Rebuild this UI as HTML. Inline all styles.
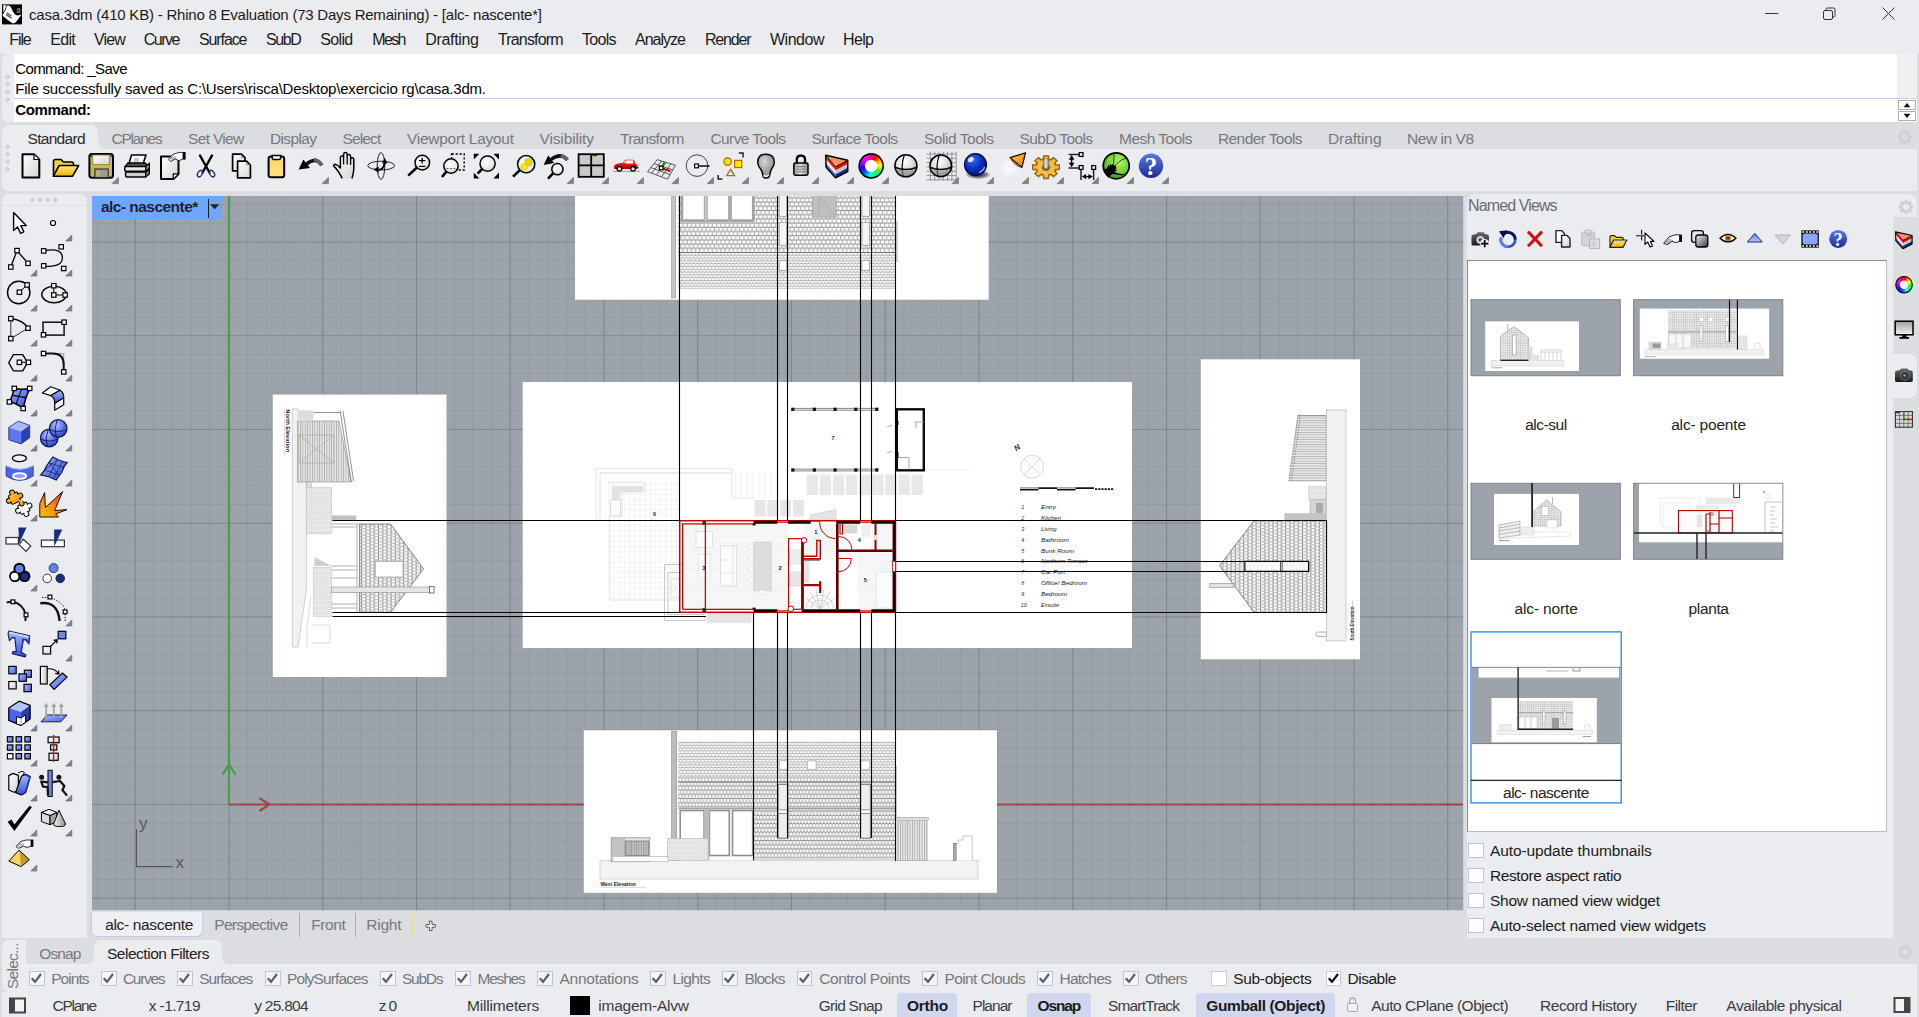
<!DOCTYPE html>
<html><head><meta charset="utf-8"><title>casa.3dm - Rhino 8</title>
<style>
html,body{margin:0;padding:0;overflow:hidden;}
body{width:1919px;height:1017px;overflow:hidden;position:relative;background:#dcdde1;font-family:"Liberation Sans",sans-serif;}
.t{position:absolute;white-space:pre;line-height:normal;}
.r{position:absolute;}
svg{position:absolute;overflow:visible;}
.cb{position:absolute;width:13.5px;height:12.5px;border:1px solid #bcc4dd;background:#f4f5f8;}
</style></head><body>

<div class="r" style="left:0px;top:0px;width:1919px;height:54px;background:#ebecf0;"></div>
<span class="t" style="left:29.00px;top:6.42px;font-size:15px;letter-spacing:-0.216px;color:#1b1b1b;">casa.3dm (410 KB) - Rhino 8 Evaluation (73 Days Remaining) - [alc- nascente*]</span>
<span class="t" style="left:9.25px;top:31.02px;font-size:16px;letter-spacing:-1.093px;color:#1b1b1b;">File</span>
<span class="t" style="left:50.25px;top:31.02px;font-size:16px;letter-spacing:-0.690px;color:#1b1b1b;">Edit</span>
<span class="t" style="left:94.00px;top:31.02px;font-size:16px;letter-spacing:-0.880px;color:#1b1b1b;">View</span>
<span class="t" style="left:143.75px;top:31.02px;font-size:16px;letter-spacing:-1.482px;color:#1b1b1b;">Curve</span>
<span class="t" style="left:199.00px;top:31.02px;font-size:16px;letter-spacing:-1.106px;color:#1b1b1b;">Surface</span>
<span class="t" style="left:266.00px;top:31.02px;font-size:16px;letter-spacing:-1.424px;color:#1b1b1b;">SubD</span>
<span class="t" style="left:320.25px;top:31.02px;font-size:16px;letter-spacing:-0.644px;color:#1b1b1b;">Solid</span>
<span class="t" style="left:372.25px;top:31.02px;font-size:16px;letter-spacing:-1.624px;color:#1b1b1b;">Mesh</span>
<span class="t" style="left:425.25px;top:31.02px;font-size:16px;letter-spacing:-0.324px;color:#1b1b1b;">Drafting</span>
<span class="t" style="left:498.00px;top:31.02px;font-size:16px;letter-spacing:-0.850px;color:#1b1b1b;">Transform</span>
<span class="t" style="left:582.00px;top:31.02px;font-size:16px;letter-spacing:-0.713px;color:#1b1b1b;">Tools</span>
<span class="t" style="left:635.00px;top:31.02px;font-size:16px;letter-spacing:-0.987px;color:#1b1b1b;">Analyze</span>
<span class="t" style="left:705.00px;top:31.02px;font-size:16px;letter-spacing:-1.194px;color:#1b1b1b;">Render</span>
<span class="t" style="left:770.00px;top:31.02px;font-size:16px;letter-spacing:-0.481px;color:#1b1b1b;">Window</span>
<span class="t" style="left:843.00px;top:31.02px;font-size:16px;letter-spacing:-0.635px;color:#1b1b1b;">Help</span>
<svg width="22" height="22" style="left:2px;top:3.5px"><rect x="0" y=".4" width="20" height="20" fill="#000"/><path d="M1.2 1.2H4.2Q3.6 5 1.4 8.4zM4.8 1.6Q8 .8 9.2 3.4Q10.4 7.6 13 10.6L15.4 11.6L19.6 10.6L13.6 18.6L10.8 19.6Q5.4 16 .8 12V10.4Q4.4 6.4 4.8 1.6z" fill="#fff"/><path d="M4 10.4L9.4 14.2M4.8 8.8L9.6 12.2" stroke="#555" stroke-width="1.3"/><text x="14.4" y="9" font-family="Liberation Sans,sans-serif" font-size="7.5" font-weight="700" fill="#8a8a8a">8</text></svg>
<svg width="1919" height="30" style="left:0;top:0"><g stroke="#333" stroke-width="1" fill="none"><path d="M1765 13.5H1778"/><rect x="1823.5" y="10.5" width="9" height="9" rx="1.5"/><path d="M1826 10.5V9.5q0-1.5 1.5-1.5h6q1.5 0 1.5 1.5v6q0 1.5-1.5 1.5h-1"/><path d="M1882.5 7.5l12 12M1894.5 7.5l-12 12"/></g></svg>
<div class="r" style="left:2px;top:54px;width:1915px;height:68px;background:#ebecf0;border-radius:7px 0 0 7px;"></div>
<div class="r" style="left:14px;top:54px;width:1883px;height:68px;background:#fff;"></div>
<div class="r" style="left:1897px;top:54px;width:20px;height:45px;background:#f0f0f3;"></div>
<div class="r" style="left:14px;top:98px;width:1903px;height:1px;background:#c9cfe4;"></div>
<div class="r" style="left:1897px;top:99px;width:20px;height:23px;background:#fff;"></div>
<span class="t" style="left:15.20px;top:60.42px;font-size:15px;letter-spacing:-0.596px;color:#000;">Command: _Save</span>
<span class="t" style="left:15.20px;top:80.12px;font-size:15px;letter-spacing:-0.202px;color:#000;">File successfully saved as C:\Users\risca\Desktop\exercicio rg\casa.3dm.</span>
<span class="t" style="left:15.20px;top:101.02px;font-size:15px;letter-spacing:-0.361px;color:#000;font-weight:700;">Command:</span>
<svg width="22" height="24" style="left:1897px;top:99px"><g fill="#fff" stroke="#adadad"><rect x="1.5" y="1.5" width="17" height="9"/><rect x="1.5" y="12.5" width="17" height="9"/></g><path d="M6.6 8.2l3.4-4.2 3.4 4.2zM6.6 14.8l3.4 4.2 3.4-4.2z" fill="#111"/></svg>
<svg width="12" height="40" style="left:2px;top:68px"><g fill="none" stroke="#b9bbc2" stroke-width="1"><circle cx="5.5" cy="9" r="1.5"/><circle cx="5.5" cy="16.5" r="1.5"/><circle cx="5.5" cy="24" r="1.5"/><circle cx="5.5" cy="31.5" r="1.5"/></g></svg>
<div class="r" style="left:2px;top:125px;width:1915px;height:66px;background:#ebecf0;border-radius:7px 0 0 7px;"></div>
<div class="r" style="left:14px;top:125px;width:1903px;height:24px;background:#dcdde1;"></div>
<div class="r" style="left:14px;top:125px;width:84px;height:24px;background:#ebecf0;border-radius:0 8px 0 0;"></div>
<svg width="10" height="10" style="left:98px;top:141px"><path d="M0 8V0q0 8 8 8z" fill="#ebecf0"/></svg>
<span class="t" style="left:27.50px;top:130.17px;font-size:15.5px;letter-spacing:-0.700px;color:#2a2a2a;">Standard</span>
<span class="t" style="left:111.50px;top:130.17px;font-size:15.5px;letter-spacing:-1.223px;color:#77787c;">CPlanes</span>
<span class="t" style="left:188.00px;top:130.17px;font-size:15.5px;letter-spacing:-0.662px;color:#77787c;">Set View</span>
<span class="t" style="left:270.00px;top:130.17px;font-size:15.5px;letter-spacing:-0.637px;color:#77787c;">Display</span>
<span class="t" style="left:342.50px;top:130.17px;font-size:15.5px;letter-spacing:-0.866px;color:#77787c;">Select</span>
<span class="t" style="left:407.00px;top:130.17px;font-size:15.5px;letter-spacing:-0.276px;color:#77787c;">Viewport Layout</span>
<span class="t" style="left:539.50px;top:130.17px;font-size:15.5px;letter-spacing:-0.134px;color:#77787c;">Visibility</span>
<span class="t" style="left:620.00px;top:130.17px;font-size:15.5px;letter-spacing:-0.693px;color:#77787c;">Transform</span>
<span class="t" style="left:710.50px;top:130.17px;font-size:15.5px;letter-spacing:-0.605px;color:#77787c;">Curve Tools</span>
<span class="t" style="left:811.50px;top:130.17px;font-size:15.5px;letter-spacing:-0.594px;color:#77787c;">Surface Tools</span>
<span class="t" style="left:924.00px;top:130.17px;font-size:15.5px;letter-spacing:-0.467px;color:#77787c;">Solid Tools</span>
<span class="t" style="left:1019.50px;top:130.17px;font-size:15.5px;letter-spacing:-0.609px;color:#77787c;">SubD Tools</span>
<span class="t" style="left:1119.00px;top:130.17px;font-size:15.5px;letter-spacing:-0.512px;color:#77787c;">Mesh Tools</span>
<span class="t" style="left:1218.00px;top:130.17px;font-size:15.5px;letter-spacing:-0.595px;color:#77787c;">Render Tools</span>
<span class="t" style="left:1328.00px;top:130.17px;font-size:15.5px;letter-spacing:-0.110px;color:#77787c;">Drafting</span>
<span class="t" style="left:1407.00px;top:130.17px;font-size:15.5px;letter-spacing:-0.455px;color:#77787c;">New in V8</span>
<svg width="12" height="40" style="left:2px;top:140px"><g fill="none" stroke="#b9bbc2" stroke-width="1"><circle cx="5.5" cy="6.75" r="1.5"/><circle cx="5.5" cy="14.25" r="1.5"/><circle cx="5.5" cy="21.75" r="1.5"/><circle cx="5.5" cy="29.25" r="1.5"/></g></svg>
<svg width="16" height="16" style="left:1896.5px;top:129px"><g transform="translate(8,8)"><rect x="-1.6" y="-7.2" width="3.2" height="3.4" fill="#d0d1d6" transform="rotate(0)"/><rect x="-1.6" y="-7.2" width="3.2" height="3.4" fill="#d0d1d6" transform="rotate(45)"/><rect x="-1.6" y="-7.2" width="3.2" height="3.4" fill="#d0d1d6" transform="rotate(90)"/><rect x="-1.6" y="-7.2" width="3.2" height="3.4" fill="#d0d1d6" transform="rotate(135)"/><rect x="-1.6" y="-7.2" width="3.2" height="3.4" fill="#d0d1d6" transform="rotate(180)"/><rect x="-1.6" y="-7.2" width="3.2" height="3.4" fill="#d0d1d6" transform="rotate(225)"/><rect x="-1.6" y="-7.2" width="3.2" height="3.4" fill="#d0d1d6" transform="rotate(270)"/><rect x="-1.6" y="-7.2" width="3.2" height="3.4" fill="#d0d1d6" transform="rotate(315)"/><circle r="4.4" fill="none" stroke="#d0d1d6" stroke-width="2.4"/></g></svg>
<svg width="0" height="0" style="left:0;top:0"><defs>
<linearGradient id="gPaper" x1="0" y1="0" x2="1" y2="1"><stop offset="0" stop-color="#fff"/><stop offset="1" stop-color="#d4d4d4"/></linearGradient>
<linearGradient id="gFolder" x1="0" y1="0" x2="0" y2="1"><stop offset="0" stop-color="#ffe98a"/><stop offset="1" stop-color="#f2b200"/></linearGradient>
<linearGradient id="gPaste" x1="0" y1="0" x2="0" y2="1"><stop offset="0" stop-color="#ffd865"/><stop offset="1" stop-color="#ffdf7e"/></linearGradient>
<radialGradient id="gGlass" cx=".4" cy=".35" r=".7"><stop offset="0" stop-color="#fff"/><stop offset="1" stop-color="#dcdcdc"/></radialGradient>
<linearGradient id="gCar" x1="0" y1="0" x2="0" y2="1"><stop offset="0" stop-color="#ff6a5a"/><stop offset=".5" stop-color="#ee1010"/><stop offset="1" stop-color="#b00000"/></linearGradient>
<radialGradient id="gBulb" cx=".4" cy=".3" r=".8"><stop offset="0" stop-color="#d6d6d6"/><stop offset=".5" stop-color="#a4a4a4"/><stop offset="1" stop-color="#8a8a8a"/></radialGradient>
<linearGradient id="gLock" x1="0" y1="0" x2="1" y2="0"><stop offset="0" stop-color="#8f8f8f"/><stop offset=".45" stop-color="#e4e4e4"/><stop offset="1" stop-color="#8a8a8a"/></linearGradient>
<radialGradient id="gSph" cx=".42" cy=".3" r=".75"><stop offset="0" stop-color="#fff"/><stop offset=".55" stop-color="#dadada"/><stop offset="1" stop-color="#9c9c9c"/></radialGradient>
<radialGradient id="gBlue" cx=".38" cy=".3" r=".8"><stop offset="0" stop-color="#3a6cf0"/><stop offset=".5" stop-color="#0a2cc0"/><stop offset="1" stop-color="#00105a"/></radialGradient>
<radialGradient id="gShadow"><stop offset="0" stop-color="#000" stop-opacity=".85"/><stop offset=".6" stop-color="#000" stop-opacity=".5"/><stop offset="1" stop-color="#000" stop-opacity="0"/></radialGradient>
<radialGradient id="gGlow"><stop offset="0" stop-color="#fff" stop-opacity=".9"/><stop offset="1" stop-color="#fff" stop-opacity="0"/></radialGradient>
<linearGradient id="gCone" x1="0" y1="0" x2="1" y2="1"><stop offset="0" stop-color="#ffcf40"/><stop offset="1" stop-color="#f07800"/></linearGradient>
<radialGradient id="gGreen" cx=".6" cy=".35" r=".8"><stop offset="0" stop-color="#b6f56a"/><stop offset=".55" stop-color="#6cd030"/><stop offset="1" stop-color="#1c6a08"/></radialGradient>
<linearGradient id="gHelp" x1="0" y1="0" x2="0" y2="1"><stop offset="0" stop-color="#5a78e6"/><stop offset="1" stop-color="#1c2c9c"/></linearGradient>
<linearGradient id="gBlueSurf" x1="0" y1="0" x2="1" y2="1"><stop offset="0" stop-color="#9db4ff"/><stop offset="1" stop-color="#2a48d8"/></linearGradient>
<linearGradient id="gBlueV" x1="0" y1="0" x2="0" y2="1"><stop offset="0" stop-color="#a8bcff"/><stop offset="1" stop-color="#3450dc"/></linearGradient>
</defs></svg>
<svg width="38" height="38" style="left:12.5px;top:148px"><path d="M9.5 6.2H21L26.3 11.5V29.5H9.5z" fill="url(#gPaper)" stroke="#000" stroke-width="2" stroke-linejoin="round"/><path d="M21 6.5V11.5H26" fill="#eee" stroke="#000" stroke-width="1.2"/></svg>
<svg width="38" height="38" style="left:47.5px;top:148px"><path d="M5.5 27V13.5q0-2 2-2h5.5l2.5 2.5h8q2 0 2 2v2.5" fill="#f3cf4a" stroke="#000" stroke-width="1.6" stroke-linejoin="round"/><path d="M5.3 28.2L11.2 17.5H30.6L24.6 28.2z" fill="url(#gFolder)" stroke="#000" stroke-width="1.6" stroke-linejoin="round"/></svg>
<svg width="38" height="38" style="left:82.5px;top:148px"><rect x="6.4" y="6" width="23.6" height="23.8" rx="2.5" fill="#c8b45a" stroke="#000" stroke-width="2"/><rect x="9.8" y="7" width="16.8" height="9.5" fill="url(#gPaper)" stroke="#8d7c2e" stroke-width=".8"/><rect x="11.8" y="21" width="13.4" height="8.6" fill="#9b9b9b" stroke="#222" stroke-width="1"/><rect x="13.3" y="22.6" width="3" height="5.6" fill="#c8b45a"/><rect x="8" y="7.6" width="1.2" height="1.4" fill="#333"/><rect x="27.2" y="7.6" width="1.2" height="1.4" fill="#333"/><path d="M35.4 29.4V35.6H29.2z" fill="#858585" stroke="#6a6a6a" stroke-width=".7" stroke-linejoin="round"/></svg>
<svg width="38" height="38" style="left:117.5px;top:148px"><path d="M10.5 17.5L13.5 7H28L24.5 17.5" fill="#fff" stroke="#000" stroke-width="1.6" stroke-linejoin="round"/><rect x="16" y="10" width="5" height="4.6" fill="#c9c9c9"/><path d="M6.8 18.6L10 15h17l4 3.6" fill="#555" stroke="#000" stroke-width="1.4"/><rect x="6.8" y="18.6" width="21" height="4.6" rx="1" fill="#e9e9e9" stroke="#000" stroke-width="1.5"/><path d="M27.8 18.6L31.4 15.4V20.2L27.8 23.2z" fill="#8a8a8a" stroke="#000" stroke-width="1.2"/><rect x="7.6" y="24" width="20.2" height="5" rx="1" fill="#cfcfcf" stroke="#000" stroke-width="1.5"/><path d="M27.8 24L31.4 21V26L27.8 29z" fill="#7a7a7a" stroke="#000" stroke-width="1.2"/></svg>
<svg width="38" height="38" style="left:152.5px;top:148px"><path d="M8 8.5H25.5V26L20.5 31H8z" fill="url(#gPaper)" stroke="#000" stroke-width="2" stroke-linejoin="round"/><path d="M25 25.8H20.3V30.5" fill="#fff" stroke="#000" stroke-width="1.2"/><path d="M15.5 11.5L19.5 6.5L26 4.4H30V11L26 12.6L22 11L17.5 13.5z" fill="#fff" stroke="#333" stroke-width="1"/><path d="M17 11.5L20.5 7.5M18.5 12.3L22 8.3M20 12.6L23.4 9" stroke="#555" stroke-width=".8"/><rect x="30" y="4" width="2.6" height="7.6" fill="#000"/></svg>
<svg width="38" height="38" style="left:187.5px;top:148px"><path d="M12 7.5L21.5 24.5M24 7.5L14.5 24.5" stroke="#000" stroke-width="2.4" stroke-linecap="round"/><ellipse cx="12" cy="25.6" rx="2.2" ry="3.6" transform="rotate(32 12 25.6)" fill="none" stroke="#1c2a6e" stroke-width="1.3"/><ellipse cx="24" cy="25.6" rx="2.2" ry="3.6" transform="rotate(-32 24 25.6)" fill="none" stroke="#1c2a6e" stroke-width="1.3"/></svg>
<svg width="38" height="38" style="left:222.5px;top:148px"><path d="M9.6 6.2H18.5L22 9.7V22.8H9.6z" fill="url(#gPaper)" stroke="#000" stroke-width="1.7" stroke-linejoin="round"/><path d="M14.6 13.2H23.5L27.4 17V29.8H14.6z" fill="url(#gPaper)" stroke="#000" stroke-width="1.7" stroke-linejoin="round"/><path d="M18.6 6.6V9.6H21.6M23.6 13.6V16.8H27" stroke="#777" stroke-width=".8" fill="none"/></svg>
<svg width="38" height="38" style="left:257.5px;top:148px"><rect x="10.6" y="8.6" width="15.6" height="20.6" rx="2.2" fill="url(#gPaste)" stroke="#000" stroke-width="2"/><path d="M14.2 7.6h8.4v2.4q0 1.4-1.4 1.4h-5.6q-1.4 0-1.4-1.4z" fill="#fff" stroke="#000" stroke-width="1.5"/></svg>
<svg width="38" height="38" style="left:292.5px;top:148px"><path d="M28.8 17.2Q23 8.5 13.5 16" fill="none" stroke="#111" stroke-width="3.6"/><path d="M28.8 17.2Q25.5 12 21 11.5" fill="none" stroke="#666" stroke-width="3.4"/><path d="M5.6 21.6L10.4 11.4L17 20z" fill="#000"/><path d="M35.4 29.4V35.6H29.2z" fill="#858585" stroke="#6a6a6a" stroke-width=".7" stroke-linejoin="round"/></svg>
<svg width="38" height="38" style="left:327.5px;top:148px"><path d="M14.2 30.4Q10 22 6 18.4Q5 16.6 7 16.2Q9.6 16.6 12.4 20V9.6Q12.6 7.8 14.2 8Q15.6 8.2 15.6 9.6V6.4Q15.8 4.6 17.4 4.6Q19 4.6 19.2 6.4V8Q19.4 6.4 21 6.6Q22.6 6.8 22.6 8.4V11Q23 9.6 24.4 9.8Q25.8 10 25.8 11.6V20Q25.8 25 24 30.4" fill="url(#gPaper)" stroke="#000" stroke-width="1.5" stroke-linejoin="round"/><path d="M15.6 9.6V16.6M19.2 8V16.4M22.6 11V17" stroke="#000" stroke-width="1.3"/></svg>
<svg width="38" height="38" style="left:362.5px;top:148px"><ellipse cx="18.2" cy="17.6" rx="13.4" ry="4.4" fill="none" stroke="#222" stroke-width="1"/><ellipse cx="18" cy="18" rx="3.8" ry="13.4" fill="none" stroke="#222" stroke-width="1"/><path d="M13.4 22L17.5 21.4Q21.4 20 21.6 14" fill="none" stroke="#000" stroke-width="2"/><path d="M19 15.2L21.8 9.8L24.4 15.4z" fill="#000"/><path d="M15.6 18.6L10.4 21.6L15.6 24.8z" fill="#000"/></svg>
<svg width="38" height="38" style="left:397.5px;top:148px"><path d="M18.9 19.5L10.2 27.6" stroke="#000" stroke-width="2.6"/><circle cx="24.3" cy="14.6" r="7.3" fill="url(#gGlass)" stroke="#000" stroke-width="1.5"/><path d="M21 12.6h6.4M24.2 9.8v5.6M21 18.4h6.4" stroke="#000" stroke-width="1.3"/></svg>
<svg width="38" height="38" style="left:432.5px;top:148px"><rect x="18.6" y="6" width="12.6" height="16" fill="none" stroke="#000" stroke-width="1.4" stroke-dasharray="2.2 1.8"/><path d="M13.4 23.6L9 29" stroke="#000" stroke-width="2.6"/><circle cx="18" cy="18" r="7.2" fill="url(#gGlass)" stroke="#000" stroke-width="1.5"/><path d="M13.5 20.6H22.5" stroke="#555" stroke-width="1" stroke-dasharray="2 1.4"/></svg>
<svg width="38" height="38" style="left:467.5px;top:148px"><path d="M5.8 5.8H11.4L5.8 11.4zM31 5.8V11.4L25.4 5.8zM5.8 30.4V24.8L11.4 30.4zM31 30.4H25.4L31 24.8z" fill="#000"/><path d="M14.2 21.0L9.6 25.6" stroke="#000" stroke-width="2.6"/><circle cx="19.6" cy="15.6" r="7.6" fill="url(#gGlass)" stroke="#000" stroke-width="1.5"/></svg>
<svg width="38" height="38" style="left:502.5px;top:148px"><path d="M16.9 22.1L10 28.6" stroke="#000" stroke-width="2.6"/><circle cx="23.2" cy="16.2" r="8.6" fill="url(#gGlass)" stroke="#000" stroke-width="1.5"/><circle cx="25.4" cy="14" r="3.8" fill="#e8d800" stroke="#b9a800" stroke-width=".5"/><circle cx="21.2" cy="18.8" r="3.3" fill="#f5e910" stroke="#b9a800" stroke-width=".5"/></svg>
<svg width="38" height="38" style="left:537.5px;top:148px"><path d="M29.4 12Q23 4 13 11.5" fill="none" stroke="#111" stroke-width="3.4"/><path d="M29.4 12Q27 8.6 22.8 7.6" fill="none" stroke="#666" stroke-width="3.2"/><path d="M5.6 17L10.2 7.4L16 15z" fill="#000"/><path d="M15.4 25.2L10 30.6" stroke="#000" stroke-width="2.6"/><circle cx="19.4" cy="21.2" r="5.6" fill="url(#gGlass)" stroke="#000" stroke-width="1.5"/><path d="M35.4 29.4V35.6H29.2z" fill="#858585" stroke="#6a6a6a" stroke-width=".7" stroke-linejoin="round"/></svg>
<svg width="38" height="38" style="left:572.5px;top:148px"><rect x="5.6" y="6.2" width="25.2" height="22.6" fill="#c9c9c9" stroke="#000" stroke-width="1.8"/><path d="M18.2 6.2V28.8M5.6 17.4H30.8" stroke="#000" stroke-width="1.8"/><rect x="19.4" y="7" width="4.6" height="1.2" fill="#1a2a9a"/><path d="M35.4 29.4V35.6H29.2z" fill="#858585" stroke="#6a6a6a" stroke-width=".7" stroke-linejoin="round"/></svg>
<svg width="38" height="38" style="left:607.5px;top:148px"><path d="M5 23.4H32" stroke="#999" stroke-width=".9"/><path d="M6 18.6Q6.4 16.4 9 15.8L14.6 14.8L16.6 12.2Q17.2 11.4 18.2 11.4H24.4Q25.8 11.4 26.4 12.6L27.8 16Q29.4 16.4 29.4 18V20.2Q29.4 21 28.4 21H7Q6 21 6 20z" fill="url(#gCar)"/><path d="M18.2 12.6H24.6L25.4 15.4H17.4z" fill="#fff"/><path d="M15.2 14.8L17.2 12.6V15.2z" fill="#fff" opacity=".8"/><circle cx="11.4" cy="20.8" r="2.3" fill="#eee" stroke="#000" stroke-width="1.3"/><circle cx="25" cy="20.8" r="2.3" fill="#eee" stroke="#000" stroke-width="1.3"/><circle cx="29.6" cy="19.6" r=".9" fill="#111"/><path d="M35.4 29.4V35.6H29.2z" fill="#858585" stroke="#6a6a6a" stroke-width=".7" stroke-linejoin="round"/></svg>
<svg width="38" height="38" style="left:642.5px;top:148px"><path d="M4.6 23.6L14.2 11.6L32.4 17.2L24.6 31.2zM7.8 19.6L27.2 26.6M11 15.6L29.8 21.9M8.6 25L18.8 13M13.4 26.7L23.4 14.4M18.6 28.7L28 15.8" fill="none" stroke="#333" stroke-width=".8"/><path d="M18.6 20L21.4 14" stroke="#10a010" stroke-width="2"/><path d="M18.6 20L27.4 23.2" stroke="#c01010" stroke-width="2"/><rect x="16.4" y="18.2" width="3.6" height="3.6" fill="#fff" stroke="#000" stroke-width="1.2"/><path d="M35.4 29.4V35.6H29.2z" fill="#858585" stroke="#6a6a6a" stroke-width=".7" stroke-linejoin="round"/></svg>
<svg width="38" height="38" style="left:677.5px;top:148px"><circle cx="19" cy="17.6" r="10.8" fill="none" stroke="#444" stroke-width="1"/><path d="M20.6 18H31.6" stroke="#000" stroke-width="1.4"/><rect x="16.6" y="16" width="3.8" height="3.8" fill="#fff" stroke="#000" stroke-width="1.2"/><path d="M35.4 29.4V35.6H29.2z" fill="#858585" stroke="#6a6a6a" stroke-width=".7" stroke-linejoin="round"/></svg>
<svg width="38" height="38" style="left:712.5px;top:148px"><path d="M25.8 5H30V9.6M5.2 27V31H9.4" fill="none" stroke="#222" stroke-width="1.5"/><circle cx="14.6" cy="13.6" r="3.8" fill="#ffe600" stroke="#b66a00" stroke-width="1.2"/><rect x="21.6" y="12.4" width="7.2" height="7.2" fill="#ffe600" stroke="#b66a00" stroke-width="1.2"/><path d="M17.6 21.2L21.4 27.6H13.8z" fill="none" stroke="#b66a00" stroke-width="1.3"/><path d="M35.4 29.4V35.6H29.2z" fill="#858585" stroke="#6a6a6a" stroke-width=".7" stroke-linejoin="round"/></svg>
<svg width="38" height="38" style="left:747.5px;top:148px"><path d="M18 6.2Q26.2 6.2 26.4 14Q26.2 17.6 23.4 21.4Q22 24 21.6 28Q21 30 18.4 30Q15.6 30 15 28Q14.6 24 12.8 21.2Q9.6 17.4 9.8 14Q10 6.2 18 6.2z" fill="url(#gBulb)" stroke="#000" stroke-width="1.5"/><path d="M15.4 27.4Q18 29.6 21 27" stroke="#eee" stroke-width="1.6" fill="none"/><path d="M35.4 29.4V35.6H29.2z" fill="#858585" stroke="#6a6a6a" stroke-width=".7" stroke-linejoin="round"/></svg>
<svg width="38" height="38" style="left:782.5px;top:148px"><path d="M13.8 15V11.4Q13.8 7.6 18 7.6Q22 7.6 22 11.4V15" fill="none" stroke="#000" stroke-width="2.4"/><rect x="10.8" y="15" width="14.2" height="12.2" rx="1.4" fill="url(#gLock)" stroke="#000" stroke-width="1.5"/><path d="M13.6 18.6H22.4M13.6 21.2H22.4M13.6 23.8H22.4" stroke="#7d7d7d" stroke-width="1.1"/><path d="M35.4 29.4V35.6H29.2z" fill="#858585" stroke="#6a6a6a" stroke-width=".7" stroke-linejoin="round"/></svg>
<svg width="38" height="38" style="left:817.5px;top:148px"><path d="M7.7 7.3L29.7 12.2L17.5 18.8z" fill="#ff9068"/><path d="M7.7 7.3L17.5 18.8V22.5L7.85 11.3z" fill="#f02418"/><path d="M7.85 11.3L17.5 22.5V26.2L8 15.3z" fill="#f4f4f4"/><path d="M8 15.3L17.5 26.2V29.8L8.1 19.2z" fill="#4a64e0"/><path d="M17.5 18.8L29.7 12.2V16L17.5 22.5z" fill="#d41208"/><path d="M17.5 22.5L29.7 16V19.8L17.5 26.2z" fill="#c8c8c8"/><path d="M17.5 26.2L29.7 19.8V23.5L17.5 29.8z" fill="#182c8c"/><path d="M7.7 7.3L29.7 12.2V23.5L17.5 29.8L8.1 19.2z" fill="none" stroke="#000" stroke-width="1.5" stroke-linejoin="round"/><path d="M7.7 7.3L17.5 18.8L29.7 12.2" fill="none" stroke="#000" stroke-width=".9"/><path d="M35.4 29.4V35.6H29.2z" fill="#858585" stroke="#6a6a6a" stroke-width=".7" stroke-linejoin="round"/></svg>
<svg width="38" height="38" style="left:852.5px;top:148px"><foreignObject x="5.6" y="5.4" width="25" height="25"><div style="width:25px;height:25px;border-radius:50%;background:conic-gradient(from 25deg,#ff0000,#ffa000,#ffff00,#40ff00,#00ff80,#00ffff,#0060ff,#2000ff,#a000ff,#ff00ff,#ff0080,#ff0000);"></div></foreignObject><circle cx="18.1" cy="17.9" r="12" fill="none" stroke="#000" stroke-width="1.5"/><circle cx="18.1" cy="17.9" r="6.2" fill="#fff"/><path d="M35.4 29.4V35.6H29.2z" fill="#858585" stroke="#6a6a6a" stroke-width=".7" stroke-linejoin="round"/></svg>
<svg width="38" height="38" style="left:887.5px;top:148px"><circle cx="17.9" cy="17.8" r="11" fill="url(#gSph)" stroke="#000" stroke-width="1.6"/><path d="M6.899999999999999 19.3Q17.9 23.8 28.9 19.3" fill="none" stroke="#000" stroke-width="1.6"/><path d="M16.4 6.800000000000001Q12.399999999999999 17.8 15.399999999999999 28.8" fill="none" stroke="#000" stroke-width="1.2"/><path d="M7.899999999999999 20.8Q17.9 25.0 27.9 20.8Q25.9 27.8 17.9 28.2Q9.899999999999999 27.8 7.899999999999999 20.8z" fill="#8d8d8d" opacity=".55"/></svg>
<svg width="38" height="38" style="left:922.5px;top:148px"><path d="M7.4 3.6V32.6M11.7 3.6V32.6M16.0 3.6V32.6M20.3 3.6V32.6M24.6 3.6V32.6M28.9 3.6V32.6M33.2 3.6V32.6M3.6 6.0H33M3.6 10.3H33M3.6 14.6H33M3.6 18.9H33M3.6 23.2H33M3.6 27.5H33M3.6 31.8H33" stroke="#8c8c8c" stroke-width=".9"/><circle cx="17.8" cy="17.8" r="10.8" fill="url(#gSph)" stroke="#000" stroke-width="1.6"/><path d="M7.0 19.3Q17.8 23.8 28.6 19.3" fill="none" stroke="#000" stroke-width="1.6"/><path d="M16.3 7.0Q12.3 17.8 15.3 28.6" fill="none" stroke="#000" stroke-width="1.2"/><path d="M8.0 20.8Q17.8 25.0 27.6 20.8Q25.6 27.6 17.8 28.0Q10.0 27.6 8.0 20.8z" fill="#8d8d8d" opacity=".55"/><path d="M35.4 29.4V35.6H29.2z" fill="#858585" stroke="#6a6a6a" stroke-width=".7" stroke-linejoin="round"/></svg>
<svg width="38" height="38" style="left:957.5px;top:148px"><ellipse cx="20" cy="26.6" rx="13" ry="4.6" fill="url(#gShadow)"/><circle cx="17.5" cy="16.6" r="11" fill="url(#gBlue)" stroke="#000a3a" stroke-width="1.2"/><ellipse cx="12.8" cy="11.6" rx="3.2" ry="2.2" transform="rotate(-35 12.8 11.6)" fill="#fff" opacity=".85"/><path d="M21 24.6Q25.4 22.8 26.6 19" stroke="#7ddcff" stroke-width="1.5" fill="none" opacity=".85"/><path d="M35.4 29.4V35.6H29.2z" fill="#858585" stroke="#6a6a6a" stroke-width=".7" stroke-linejoin="round"/></svg>
<svg width="38" height="38" style="left:992.5px;top:148px"><g transform="translate(5.5,0)"><circle cx="11" cy="20" r="10.5" fill="url(#gGlow)"/><path d="M11.6 9.6L27 4.8L23.4 19.4z" fill="url(#gCone)" stroke="#000" stroke-width="1.2" stroke-linejoin="round"/><path d="M11.6 9.6Q15 17.4 23.4 19.4Q17.4 18.4 11.6 9.6z" fill="#fff3c8" stroke="#5a3a00" stroke-width=".7"/></g><path d="M35.4 29.4V35.6H29.2z" fill="#858585" stroke="#6a6a6a" stroke-width=".7" stroke-linejoin="round"/></svg>
<svg width="38" height="38" style="left:1027.5px;top:148px"><path d="M15.3 11.1L15.5 7.8L20.5 7.8L20.7 11.1L22.7 11.8L25.6 9.6L29.2 12.6L26.6 15.0L27.4 16.7L31.4 16.9L31.4 21.1L27.4 21.3L26.6 23.0L29.2 25.4L25.6 28.4L22.7 26.2L20.7 26.9L20.5 30.2L15.5 30.2L15.3 26.9L13.3 26.2L10.4 28.4L6.8 25.4L9.4 23.0L8.6 21.3L4.6 21.1L4.6 16.9L8.6 16.7L9.4 15.0L6.8 12.6L10.4 9.6L13.3 11.8z" fill="#f2bd48" stroke="#8a5a00" stroke-width="1.2" stroke-linejoin="round"/><path d="M15.3 12.1L15.5 8.8L20.5 8.8L20.7 12.1L22.7 12.8L25.6 10.6L29.2 13.6L26.6 16.0L27.4 17.7L31.4 17.9L31.4 22.1L27.4 22.3L26.6 24.0L29.2 26.4L25.6 29.4L22.7 27.2L20.7 27.9L20.5 31.2L15.5 31.2L15.3 27.9L13.3 27.2L10.4 29.4L6.8 26.4L9.4 24.0L8.6 22.3L4.6 22.1L4.6 17.9L8.6 17.7L9.4 16.0L6.8 13.6L10.4 10.6L13.3 12.8z" fill="none" stroke="#b86a08" stroke-width=".8" opacity=".7"/><ellipse cx="18" cy="19.6" rx="3.8" ry="2.8" fill="#8a6a30" stroke="#6a4a00" stroke-width=".8"/><rect x="15.4" y="10.4" width="5.2" height="10.4" rx="2.4" fill="url(#gLock)" stroke="#666" stroke-width=".7"/><path d="M35.4 29.4V35.6H29.2z" fill="#858585" stroke="#6a6a6a" stroke-width=".7" stroke-linejoin="round"/></svg>
<svg width="38" height="38" style="left:1062.5px;top:148px"><path d="M5.6 6.4H16M5.6 20H16M18 22V32M30.6 22V32" stroke="#222" stroke-width="1.5"/><path d="M8.6 9V17.4M8.6 8.4L7 11h3.2zM8.6 18L7 15.4h3.2z" stroke="#000" stroke-width="1.4" fill="#000"/><path d="M20.6 28.6H28M20 28.6L22.6 27v3.2zM28.6 28.6L26 27v3.2z" stroke="#000" stroke-width="1.2" fill="#000"/><rect x="16.2" y="4.6" width="3.8" height="3.8" fill="#fff" stroke="#000" stroke-width="1.3"/><rect x="16.2" y="17.6" width="3.8" height="3.8" fill="#fff" stroke="#000" stroke-width="1.3"/><rect x="28.8" y="17.6" width="3.8" height="3.8" fill="#fff" stroke="#000" stroke-width="1.3"/><path d="M35.4 29.4V35.6H29.2z" fill="#858585" stroke="#6a6a6a" stroke-width=".7" stroke-linejoin="round"/></svg>
<svg width="38" height="38" style="left:1097.5px;top:148px"><circle cx="18.2" cy="17.8" r="13" fill="url(#gGreen)" stroke="#000" stroke-width="1.7"/><path d="M16 5.4L15.6 16M28 10.2Q19 13 16.6 19.4" stroke="#1c3a10" stroke-width=".9" fill="none"/><path d="M5.6 21.4L9 20.4L10.6 16.6L11.6 18.4L12.4 15.6L13.4 17.4L14.4 16L16.6 17.2L18.6 20L17.2 21.6L19 22L16.6 24L20 25.6L25 26.2L28 25.2L24.6 27.4L20.6 27L14.6 26Q12 27 11 30Q6.6 26.4 5.6 21.4z" fill="#000"/><path d="M35.4 29.4V35.6H29.2z" fill="#858585" stroke="#6a6a6a" stroke-width=".7" stroke-linejoin="round"/></svg>
<svg width="38" height="38" style="left:1132.5px;top:148px"><circle cx="18" cy="17.8" r="12.2" fill="url(#gHelp)"/><text x="18" y="26.8" font-family="Liberation Serif,serif" font-weight="700" font-size="25" text-anchor="middle" fill="#fff">?</text><path d="M35.4 29.4V35.6H29.2z" fill="#858585" stroke="#6a6a6a" stroke-width=".7" stroke-linejoin="round"/></svg>
<div class="r" style="left:2px;top:194px;width:85px;height:744px;background:#ebecf0;border-radius:7px 7px 0 0;"></div>
<div class="r" style="left:2px;top:205px;width:85px;height:1px;background:#dfe0e4;"></div>
<svg width="40" height="8" style="left:28px;top:196px"><g fill="none" stroke="#b9bbc2" stroke-width="1"><circle cx="4.5" cy="4" r="1.5"/><circle cx="12" cy="4" r="1.5"/><circle cx="19.5" cy="4" r="1.5"/><circle cx="27" cy="4" r="1.5"/></g></svg>
<svg width="0" height="0" style="left:0;top:0"><defs>
<radialGradient id="gBlueBall" cx=".4" cy=".3" r=".8"><stop offset="0" stop-color="#b8c8ff"/><stop offset=".5" stop-color="#5a74ee"/><stop offset="1" stop-color="#2034a8"/></radialGradient>
<linearGradient id="gBlueSq" x1="0" y1="0" x2="1" y2="1"><stop offset="0" stop-color="#a8bcff"/><stop offset="1" stop-color="#4460e8"/></linearGradient>
<linearGradient id="gOrange" x1="0" y1="0" x2="1" y2="1"><stop offset="0" stop-color="#ffd030"/><stop offset="1" stop-color="#f08a00"/></linearGradient>
<linearGradient id="gExpl" x1="0" y1="1" x2="1" y2="0"><stop offset="0" stop-color="#ffc400"/><stop offset=".45" stop-color="#ff8a00"/><stop offset="1" stop-color="#e83000"/></linearGradient>
<linearGradient id="gLock2" x1="0" y1="0" x2="1" y2="0"><stop offset="0" stop-color="#fff"/><stop offset="1" stop-color="#c4c4c4"/></linearGradient>
<linearGradient id="gCone2" x1="0" y1="0" x2="1" y2="0"><stop offset="0" stop-color="#f4f4f4"/><stop offset="1" stop-color="#8e8e8e"/></linearGradient>
</defs></svg>
<svg width="38" height="38" style="left:0.5px;top:204.5px"><path d="M12.6 7.6V25.6L16.6 22L19.6 28.4L22.8 26.8L19.8 20.6H25.2z" fill="#fff" stroke="#000" stroke-width="1.4" stroke-linejoin="round"/></svg>
<svg width="38" height="38" style="left:36.3px;top:204.5px"><circle cx="17" cy="18" r="2.5" fill="#fff" stroke="#000" stroke-width="1.2"/><path d="M35.8 30V36H29.8z" fill="#858585" stroke="#6a6a6a" stroke-width=".7" stroke-linejoin="round"/></svg>
<svg width="38" height="38" style="left:0.5px;top:239.5px"><path d="M9.8 27L16 10.6L27 23.3" fill="none" stroke="#000" stroke-width="1.3"/><rect x="7.6" y="24.8" width="4.4" height="4.4" fill="#fff" stroke="#000" stroke-width="1.2"/><rect x="13.8" y="8.4" width="4.4" height="4.4" fill="#fff" stroke="#000" stroke-width="1.2"/><rect x="24.8" y="21.1" width="4.4" height="4.4" fill="#fff" stroke="#000" stroke-width="1.2"/><path d="M35.8 30V36H29.8z" fill="#858585" stroke="#6a6a6a" stroke-width=".7" stroke-linejoin="round"/></svg>
<svg width="38" height="38" style="left:36.3px;top:239.5px"><path d="M7.7 10.9C20 8 27 11 26.3 18.5C26 25 18 27.5 7.7 25.8" fill="none" stroke="#000" stroke-width="1.3"/><rect x="5.5" y="8.7" width="4.4" height="4.4" fill="#fff" stroke="#000" stroke-width="1.2"/><rect x="23.0" y="4.6" width="4.4" height="4.4" fill="#fff" stroke="#000" stroke-width="1.2"/><rect x="5.5" y="23.6" width="4.4" height="4.4" fill="#fff" stroke="#000" stroke-width="1.2"/><rect x="25.5" y="26.3" width="4.4" height="4.4" fill="#fff" stroke="#000" stroke-width="1.2"/><path d="M35.8 30V36H29.8z" fill="#858585" stroke="#6a6a6a" stroke-width=".7" stroke-linejoin="round"/></svg>
<svg width="38" height="38" style="left:0.5px;top:274.5px"><circle cx="17.7" cy="17.5" r="11.2" fill="none" stroke="#000" stroke-width="1.4"/><path d="M18.4 17.2L26.1 9.9" stroke="#000" stroke-width="1"/><rect x="16.2" y="15.0" width="4.4" height="4.4" fill="#fff" stroke="#000" stroke-width="1.2"/><rect x="23.9" y="7.7" width="4.4" height="4.4" fill="#fff" stroke="#000" stroke-width="1.2"/><path d="M35.8 30V36H29.8z" fill="#858585" stroke="#6a6a6a" stroke-width=".7" stroke-linejoin="round"/></svg>
<svg width="38" height="38" style="left:36.3px;top:274.5px"><ellipse cx="18.1" cy="19.5" rx="12.3" ry="8.3" fill="none" stroke="#000" stroke-width="1.4"/><path d="M17.8 10.7V20H29.1" fill="none" stroke="#000" stroke-width="1"/><rect x="15.6" y="8.5" width="4.4" height="4.4" fill="#fff" stroke="#000" stroke-width="1.2"/><rect x="15.6" y="17.8" width="4.4" height="4.4" fill="#fff" stroke="#000" stroke-width="1.2"/><rect x="26.9" y="17.8" width="4.4" height="4.4" fill="#fff" stroke="#000" stroke-width="1.2"/><path d="M35.8 30V36H29.8z" fill="#858585" stroke="#6a6a6a" stroke-width=".7" stroke-linejoin="round"/></svg>
<svg width="38" height="38" style="left:0.5px;top:309.5px"><path d="M9.8 8.6Q22 10 27 18.2" fill="none" stroke="#000" stroke-width="1.5"/><path d="M9.8 8.6V28.6L27 18.2" fill="none" stroke="#000" stroke-width=".8"/><rect x="7.6" y="6.4" width="4.4" height="4.4" fill="#fff" stroke="#000" stroke-width="1.2"/><rect x="24.8" y="16.0" width="4.4" height="4.4" fill="#fff" stroke="#000" stroke-width="1.2"/><rect x="7.6" y="26.4" width="4.4" height="4.4" fill="#fff" stroke="#000" stroke-width="1.2"/><path d="M35.8 30V36H29.8z" fill="#858585" stroke="#6a6a6a" stroke-width=".7" stroke-linejoin="round"/></svg>
<svg width="38" height="38" style="left:36.3px;top:309.5px"><rect x="7" y="12.2" width="21.1" height="12.9" fill="none" stroke="#000" stroke-width="1.4"/><rect x="25.9" y="10.0" width="4.4" height="4.4" fill="#fff" stroke="#000" stroke-width="1.2"/><rect x="5.3" y="22.6" width="4.4" height="4.4" fill="#fff" stroke="#000" stroke-width="1.2"/><path d="M35.8 30V36H29.8z" fill="#858585" stroke="#6a6a6a" stroke-width=".7" stroke-linejoin="round"/></svg>
<svg width="38" height="38" style="left:0.5px;top:344.5px"><path d="M26.5 17.7L21.8 9.6H12.4L7.7 17.7L12.4 25.8H21.8z" fill="none" stroke="#000" stroke-width="1.3"/><path d="M18.4 17.3H27.4" stroke="#000" stroke-width="1"/><rect x="16.2" y="15.1" width="4.4" height="4.4" fill="#fff" stroke="#000" stroke-width="1.2"/><rect x="25.2" y="15.1" width="4.4" height="4.4" fill="#fff" stroke="#000" stroke-width="1.2"/><path d="M35.8 30V36H29.8z" fill="#858585" stroke="#6a6a6a" stroke-width=".7" stroke-linejoin="round"/></svg>
<svg width="38" height="38" style="left:36.3px;top:344.5px"><path d="M18 8.5H27.7V19" fill="none" stroke="#888" stroke-width=".8"/><path d="M7.5 8.5H17Q27.7 8.5 27.7 19.5V26.9" fill="none" stroke="#111" stroke-width="2"/><rect x="5.3" y="6.3" width="4.4" height="4.4" fill="#fff" stroke="#000" stroke-width="1.2"/><rect x="25.5" y="24.7" width="4.4" height="4.4" fill="#fff" stroke="#000" stroke-width="1.2"/><path d="M35.8 30V36H29.8z" fill="#858585" stroke="#6a6a6a" stroke-width=".7" stroke-linejoin="round"/></svg>
<svg width="38" height="38" style="left:0.5px;top:379.5px"><path d="M13.3 8.4Q21 10 28.7 8.4Q24 18 22.2 28.5Q16 23 8.4 21.9Q12 15 13.3 8.4z" fill="url(#gBlueSurf)" stroke="#000" stroke-width="1.5"/><path d="M20.6 9.4Q17 18 15 24.4M11 15.4Q19 16.6 25.6 17.6" fill="none" stroke="#000" stroke-width="1.1"/><rect x="11.1" y="6.2" width="4.4" height="4.4" fill="#fff" stroke="#000" stroke-width="1.2"/><rect x="26.5" y="6.2" width="4.4" height="4.4" fill="#fff" stroke="#000" stroke-width="1.2"/><rect x="6.2" y="19.7" width="4.4" height="4.4" fill="#fff" stroke="#000" stroke-width="1.2"/><rect x="20.0" y="26.3" width="4.4" height="4.4" fill="#fff" stroke="#000" stroke-width="1.2"/><path d="M35.8 30V36H29.8z" fill="#858585" stroke="#6a6a6a" stroke-width=".7" stroke-linejoin="round"/></svg>
<svg width="38" height="38" style="left:36.3px;top:379.5px"><path d="M6.4 13L14.6 6.8L24.2 10.2L14.8 15.6z" fill="#fff" stroke="#000" stroke-width="1.2" stroke-linejoin="round"/><path d="M14.8 15.6L24.2 10.2Q28 13 27.7 17.8L18.7 23.4Q19 18 14.8 15.6z" fill="url(#gBlueV)" stroke="#000" stroke-width="1.2" stroke-linejoin="round"/><path d="M18.7 23.4L27.7 17.8V24.7L18.7 30.2z" fill="#f2f2f2" stroke="#000" stroke-width="1.2" stroke-linejoin="round"/><path d="M35.8 30V36H29.8z" fill="#858585" stroke="#6a6a6a" stroke-width=".7" stroke-linejoin="round"/></svg>
<svg width="38" height="38" style="left:0.5px;top:414.5px"><path d="M7.8 12.4L17.4 6.2L28.7 10.3L20.1 16.5z" fill="#a9bbff"/><path d="M7.8 12.4L20.1 16.5V28.9L7.8 24.8z" fill="#5e78f0"/><path d="M20.1 16.5L28.7 10.3V22.7L20.1 28.9z" fill="#2c40b8"/><path d="M7.8 12.4L17.4 6.2L28.7 10.3V22.7L20.1 28.9L7.8 24.8z" fill="none" stroke="#1a2870" stroke-width=".8" stroke-linejoin="round"/><path d="M35.8 30V36H29.8z" fill="#858585" stroke="#6a6a6a" stroke-width=".7" stroke-linejoin="round"/></svg>
<svg width="38" height="38" style="left:36.3px;top:414.5px"><circle cx="13.2" cy="23" r="8.8" fill="url(#gBlueBall)" stroke="#101a50" stroke-width="1.2"/><path d="M4.399999999999999 24Q13.2 28 22.0 24M12.2 14.2Q8.7 23 11.2 31.8" fill="none" stroke="#101a50" stroke-width=".9"/><circle cx="22.2" cy="13.5" r="8.8" fill="url(#gBlueBall)" stroke="#101a50" stroke-width="1.2"/><path d="M13.399999999999999 14.5Q22.2 18.5 31.0 14.5M21.2 4.699999999999999Q17.7 13.5 20.2 22.3" fill="none" stroke="#101a50" stroke-width=".9"/><path d="M35.8 30V36H29.8z" fill="#858585" stroke="#6a6a6a" stroke-width=".7" stroke-linejoin="round"/></svg>
<svg width="38" height="38" style="left:0.5px;top:449.5px"><ellipse cx="18.4" cy="8.3" rx="7" ry="3.4" fill="#f4f4f4" stroke="#000" stroke-width="1.3"/><path d="M5 15.9Q18.6 23 32.3 15.9V26Q18.6 35 5 26z" fill="#4a64e8" stroke="#1a2870" stroke-width=".6"/><path d="M5 15.9Q18.6 23 32.3 15.9" fill="none" stroke="#a8b8ff" stroke-width="1"/><ellipse cx="18.6" cy="26" rx="6.6" ry="2.8" fill="#8da0ff" stroke="#fff" stroke-width="1.8"/><path d="M35.8 30V36H29.8z" fill="#858585" stroke="#6a6a6a" stroke-width=".7" stroke-linejoin="round"/></svg>
<svg width="38" height="38" style="left:36.3px;top:449.5px"><path d="M16.7 7Q24 11.5 31.1 12.5Q27 17 26 22Q23 26 20.1 30.1Q13 26 4.6 24.9Q9 21 10.5 16Q14 11 16.7 7z" fill="url(#gBlueSurf)" stroke="#101a50" stroke-width="1.2"/><path d="M12.6 12.4Q20 16 28.4 17.2M8.6 20Q16 22 23.4 25.4M21.4 9.6Q18 16 13 26.4M26.4 11.6Q23 18 17.4 28.4M12.6 12.4L23.4 25.4M21.4 9.6L8.6 20" fill="none" stroke="#101a50" stroke-width=".7"/><path d="M35.8 30V36H29.8z" fill="#858585" stroke="#6a6a6a" stroke-width=".7" stroke-linejoin="round"/></svg>
<svg width="38" height="38" style="left:0.5px;top:484.5px"><g transform="translate(13.6,13.2) rotate(-24)"><circle cx="0" cy="-6.199999999999999" r="2.5" fill="url(#gOrange)" stroke="#000" stroke-width="1"/><circle cx="-6.199999999999999" cy="0" r="2.5" fill="url(#gOrange)" stroke="#000" stroke-width="1"/><circle cx="6.199999999999999" cy="0" r="2.5" fill="url(#gOrange)" stroke="#000" stroke-width="1"/><rect x="-4.8" y="-4.8" width="9.6" height="9.6" rx="1" fill="url(#gOrange)" stroke="#000" stroke-width="1"/><rect x="-1.5" y="-5.7" width="3" height="1.8" fill="url(#gOrange)"/><rect x="-5.7" y="-1.5" width="1.8" height="3" fill="url(#gOrange)"/><rect x="3.9" y="-1.5" width="1.8" height="3" fill="url(#gOrange)"/></g><g transform="translate(22.8,23.2) rotate(-24)"><circle cx="6.199999999999999" cy="0" r="2.5" fill="#fff" stroke="#000" stroke-width="1"/><circle cx="0" cy="6.199999999999999" r="2.5" fill="#fff" stroke="#000" stroke-width="1"/><circle cx="-6.199999999999999" cy="0" r="2.5" fill="#fff" stroke="#000" stroke-width="1"/><rect x="-4.8" y="-4.8" width="9.6" height="9.6" rx="1" fill="#fff" stroke="#000" stroke-width="1"/><rect x="3.9" y="-1.5" width="1.8" height="3" fill="#fff"/><rect x="-1.5" y="3.9" width="3" height="1.8" fill="#fff"/><rect x="-5.7" y="-1.5" width="1.8" height="3" fill="#fff"/></g><g transform="translate(22.8,23.2) rotate(-24)"><circle cx="0" cy="-5" r="2.3" fill="url(#gOrange)" stroke="#000" stroke-width="1"/><rect x="-1.6" y="-9" width="3.2" height="3" fill="url(#gOrange)"/></g><path d="M35.8 30V36H29.8z" fill="#858585" stroke="#6a6a6a" stroke-width=".7" stroke-linejoin="round"/></svg>
<svg width="38" height="38" style="left:36.3px;top:484.5px"><path d="M3.8 32V18.4L8.6 7.6L9.4 22.6L26.6 6.6L18.6 25.6L31 24.6L19.6 29L22.4 32z" fill="url(#gExpl)" stroke="#1a0800" stroke-width="1" stroke-linejoin="round"/></svg>
<svg width="38" height="38" style="left:0.5px;top:519.5px"><rect x="5" y="17.5" width="12.4" height="6.5" fill="#fff" stroke="#333" stroke-width="1.2"/><path d="M22.2 19.2L29.8 26L25 31.5L18.1 24.7z" fill="#fff" stroke="#333" stroke-width="1.2"/><path d="M17.4 7.5H25.6L18.1 23.6z" fill="#1c2c82"/></svg>
<svg width="38" height="38" style="left:36.3px;top:519.5px"><rect x="5.4" y="20.1" width="23" height="6.6" fill="#fff" stroke="#333" stroke-width="1.2"/><path d="M18.1 9.5H26.3L18.1 26.7z" fill="#1c2c82"/></svg>
<svg width="38" height="38" style="left:0.5px;top:554.5px"><circle cx="18.4" cy="13.8" r="6" fill="#000"/><circle cx="13.9" cy="21.3" r="5.8" fill="#000"/><circle cx="23.6" cy="21.3" r="5.8" fill="#000"/><circle cx="18.4" cy="13.8" r="4" fill="#5a82f0"/><circle cx="13.6" cy="21.5" r="3.8" fill="#fff"/><circle cx="23.8" cy="21.5" r="3.8" fill="#1c2c82"/><path d="M35.8 30V36H29.8z" fill="#858585" stroke="#6a6a6a" stroke-width=".7" stroke-linejoin="round"/></svg>
<svg width="38" height="38" style="left:36.3px;top:554.5px"><circle cx="17.6" cy="13.1" r="4.5" fill="#5a82f0" stroke="#222" stroke-width=".8"/><circle cx="11.2" cy="23.4" r="4.3" fill="#fff" stroke="#222" stroke-width=".9"/><circle cx="24.2" cy="23.4" r="4.3" fill="#1c2c82" stroke="#111" stroke-width=".8"/></svg>
<svg width="38" height="38" style="left:0.5px;top:589.5px"><path d="M5.7 12.6Q8 11.6 11.9 11.8Q22 14 25 24.9L24.3 31" fill="none" stroke="#111" stroke-width="2"/><rect x="10.0" y="9.9" width="3.8" height="3.8" fill="#fff" stroke="#000" stroke-width="1.2"/><rect x="23.1" y="23.0" width="3.8" height="3.8" fill="#fff" stroke="#000" stroke-width="1.2"/></svg>
<svg width="38" height="38" style="left:36.3px;top:589.5px"><path d="M4.3 13.2Q22 11 23.6 31" fill="none" stroke="#111" stroke-width="2.4"/><path d="M6 7.4H13M15 8Q27 12 29 20M29.2 24V32" fill="none" stroke="#111" stroke-width="1" stroke-dasharray="1.4 1.4"/><rect x="12.0" y="5.1" width="3.8" height="3.8" fill="#fff" stroke="#000" stroke-width="1.2"/><rect x="27.2" y="19.9" width="3.8" height="3.8" fill="#fff" stroke="#000" stroke-width="1.2"/><path d="M35.8 30V36H29.8z" fill="#858585" stroke="#6a6a6a" stroke-width=".7" stroke-linejoin="round"/></svg>
<svg width="38" height="38" style="left:0.5px;top:624.5px"><path d="M7.8 6L28.7 10.8L27.7 18.4L25 14.9L22.2 14.3L20.1 27.3L25 30.1L24.3 31.9L11.2 28.7L11.9 26.6L15.3 26.6L13.9 12.9L11.2 12.6L8.4 15.6L7.1 8.8z" fill="url(#gBlueV)" stroke="#101a50" stroke-width="1.1" stroke-linejoin="round"/><path d="M8.2 6.6L28.2 11.2L28 12.8L7.8 8.2z" fill="#d0daff"/><path d="M20.1 27.3L22.2 14.3L25 14.9L27.7 18.4L28.4 12.6" fill="none" stroke="#2034a8" stroke-width="1.4"/></svg>
<svg width="38" height="38" style="left:36.3px;top:624.5px"><rect x="7" y="21.4" width="7.6" height="7.6" fill="url(#gPaper)" stroke="#000" stroke-width="1.2"/><rect x="22.2" y="6.3" width="7.6" height="7.5" fill="#6c8af4" stroke="#000" stroke-width="1.2"/><path d="M14.4 21.6L21 15M21.4 14.6L17.6 15.4M21.4 14.6L20.6 18.4" stroke="#000" stroke-width="1.2" fill="none"/><path d="M35.8 30V36H29.8z" fill="#858585" stroke="#6a6a6a" stroke-width=".7" stroke-linejoin="round"/></svg>
<svg width="38" height="38" style="left:0.5px;top:659.5px"><rect x="7.8" y="6.4" width="7.4" height="7.4" fill="url(#gBlueSq)" stroke="#000" stroke-width="1.2"/><rect x="23.4" y="10.2" width="7" height="7" fill="url(#gBlueSq)" stroke="#000" stroke-width="1.2"/><rect x="18" y="13.9" width="7.4" height="7.4" fill="url(#gBlueSq)" stroke="#000" stroke-width="1.2"/><rect x="7.8" y="21.5" width="7.4" height="7.4" fill="url(#gPaper)" stroke="#000" stroke-width="1.2"/><rect x="23" y="24.3" width="7.4" height="7.4" fill="url(#gBlueSq)" stroke="#000" stroke-width="1.2"/></svg>
<svg width="38" height="38" style="left:36.3px;top:659.5px"><rect x="4.4" y="6.4" width="6.8" height="17.6" fill="url(#gLock2)" stroke="#000" stroke-width="1.2"/><path d="M26.3 13L31.1 17.1L18.1 29.5L13.9 24.7z" fill="url(#gBlueSq)" stroke="#000" stroke-width="1.2"/><path d="M11.2 8.8Q19 8 22.6 13.8M22.9 14.3L22.6 10.4M22.9 14.3L19 13.4" fill="none" stroke="#000" stroke-width="1.1"/></svg>
<svg width="38" height="38" style="left:0.5px;top:694.5px"><path d="M7.8 13L18.1 6.2L29.1 10.3L20.1 17z" fill="#b4c4ff"/><path d="M7.8 13L20.1 17V30.3L7.8 25.4z" fill="#4a66ee"/><path d="M20.1 17L29.1 10.3V24L20.1 30.3z" fill="#2a3eb4"/><path d="M7.8 13L18.1 6.2L29.1 10.3V24L20.1 30.3L7.8 25.4z" fill="none" stroke="#000" stroke-width="1.3" stroke-linejoin="round"/><path d="M15.4 29V21.6L20.1 23L24.6 19.6V27.2L20.1 30.3z" fill="#fff" stroke="#000" stroke-width="1"/><path d="M20.1 23V30" stroke="#888" stroke-width=".8"/><path d="M35.8 30V36H29.8z" fill="#858585" stroke="#6a6a6a" stroke-width=".7" stroke-linejoin="round"/></svg>
<svg width="38" height="38" style="left:36.3px;top:694.5px"><path d="M11.2 20H31.1L24.9 26.8H5z" fill="url(#gBlueSq)" stroke="#222" stroke-width="1"/><path d="M10.2 23V11" stroke="#a8a4a0" stroke-width="1.8"/><path d="M7.6 12L10.2 7.8L12.799999999999999 12z" fill="#a8a4a0"/><path d="M17.8 23V11" stroke="#a8a4a0" stroke-width="1.8"/><path d="M15.200000000000001 12L17.8 7.8L20.400000000000002 12z" fill="#a8a4a0"/><path d="M25.3 23V11" stroke="#a8a4a0" stroke-width="1.8"/><path d="M22.7 12L25.3 7.8L27.900000000000002 12z" fill="#a8a4a0"/><path d="M35.8 30V36H29.8z" fill="#858585" stroke="#6a6a6a" stroke-width=".7" stroke-linejoin="round"/></svg>
<svg width="38" height="38" style="left:0.5px;top:729.5px"><rect x="6.4" y="6.7" width="5.5" height="5.3" fill="url(#gBlueSq)" stroke="#000" stroke-width="1.2"/><rect x="15.1" y="6.7" width="5.5" height="5.3" fill="url(#gBlueSq)" stroke="#000" stroke-width="1.2"/><rect x="23.9" y="6.7" width="5.5" height="5.3" fill="url(#gBlueSq)" stroke="#000" stroke-width="1.2"/><rect x="6.4" y="14.9" width="5.5" height="5.3" fill="url(#gBlueSq)" stroke="#000" stroke-width="1.2"/><rect x="15.1" y="14.9" width="5.5" height="5.3" fill="url(#gBlueSq)" stroke="#000" stroke-width="1.2"/><rect x="23.9" y="14.9" width="5.5" height="5.3" fill="url(#gBlueSq)" stroke="#000" stroke-width="1.2"/><rect x="6.4" y="23.6" width="5.5" height="5.3" fill="#fff" stroke="#000" stroke-width="1.2"/><rect x="15.1" y="23.6" width="5.5" height="5.3" fill="url(#gBlueSq)" stroke="#000" stroke-width="1.2"/><rect x="23.9" y="23.6" width="5.5" height="5.3" fill="url(#gBlueSq)" stroke="#000" stroke-width="1.2"/><path d="M35.8 30V36H29.8z" fill="#858585" stroke="#6a6a6a" stroke-width=".7" stroke-linejoin="round"/></svg>
<svg width="38" height="38" style="left:36.3px;top:729.5px"><rect x="12.1" y="7" width="11" height="5.7" fill="url(#gPaper)" stroke="#000" stroke-width="1.2"/><rect x="14.6" y="14.9" width="6.2" height="5.1" fill="url(#gPaper)" stroke="#000" stroke-width="1.2"/><rect x="13" y="23.2" width="9.2" height="7.1" fill="url(#gPaper)" stroke="#000" stroke-width="1.2"/><path d="M17.6 4.9V31.9" stroke="#d01010" stroke-width="1.4"/><path d="M35.8 30V36H29.8z" fill="#858585" stroke="#6a6a6a" stroke-width=".7" stroke-linejoin="round"/></svg>
<svg width="38" height="38" style="left:0.5px;top:764.5px"><path d="M7.8 10.6L12 8.4L17.4 10.4V25.6L13 27.3L7.8 25z" fill="url(#gPaper)" stroke="#000" stroke-width="1.2" stroke-linejoin="round"/><path d="M17 8L21 6.2L23.4 7.4L21 12" fill="#f0f0f0" stroke="#000" stroke-width="1"/><path d="M20.6 11L24.6 9.4L29.2 11.6L24.6 27.4L20.4 30L14.6 27.6z" fill="url(#gBlueV)" stroke="#000" stroke-width="1.2" stroke-linejoin="round"/><path d="M24.8 10L29 12L24.6 27.2" fill="none" stroke="#2038b0" stroke-width="1.6"/><path d="M35.8 30V36H29.8z" fill="#858585" stroke="#6a6a6a" stroke-width=".7" stroke-linejoin="round"/></svg>
<svg width="38" height="38" style="left:36.3px;top:764.5px"><rect x="12" y="5.3" width="4.2" height="26.2" fill="#6c84f0" stroke="#111" stroke-width="1.1"/><circle cx="5.6" cy="12.2" r="2.5" fill="#111"/><circle cx="22.9" cy="12.2" r="2.5" fill="#111"/><path d="M5 15.6L7 21.6L11.6 22L12 30.6M6 16.6L12 17.4" fill="none" stroke="#111" stroke-width="2.2" stroke-linejoin="round"/><path d="M16.4 17.2L24 16L28.4 21L26.4 25L31 30.6" fill="none" stroke="#111" stroke-width="2.2" stroke-linejoin="round"/><path d="M35.8 30V36H29.8z" fill="#858585" stroke="#6a6a6a" stroke-width=".7" stroke-linejoin="round"/></svg>
<svg width="38" height="38" style="left:0.5px;top:799.5px"><path d="M6.6 21.8L10.6 19.4L13.4 24.4L28.4 5.8L31 7L13.4 31z" fill="#000"/><path d="M35.8 30V36H29.8z" fill="#858585" stroke="#6a6a6a" stroke-width=".7" stroke-linejoin="round"/></svg>
<svg width="38" height="38" style="left:36.3px;top:799.5px"><path d="M5.4 12.4L13 9.3L20.8 12.4L14 15.6z" fill="#f2f2f2" stroke="#000" stroke-width="1"/><path d="M5.4 12.4L14 15.6V24.7L5.4 21.6z" fill="#dcdcdc" stroke="#000" stroke-width="1"/><path d="M14 15.6L20.8 12.4V21.6L14 24.7z" fill="#a4a4a4" stroke="#000" stroke-width="1"/><path d="M22.9 10.2L29.6 24Q29.6 26.6 23.6 26.6Q17.6 26.6 17.6 24z" fill="url(#gCone2)" stroke="#000" stroke-width="1"/><path d="M35.8 30V36H29.8z" fill="#858585" stroke="#6a6a6a" stroke-width=".7" stroke-linejoin="round"/></svg>
<svg width="38" height="38" style="left:0.5px;top:834.5px"><path d="M18.1 15.1L7.8 26.1L20.1 31.6z" fill="#f7d45c"/><path d="M18.1 15.1L28.4 24.8L20.1 31.6z" fill="#c89a28"/><path d="M18.1 15.1L7.8 26.1L20.1 31.6L28.4 24.8z" fill="none" stroke="#000" stroke-width="1" stroke-linejoin="round"/><path d="M15 11.6L19.6 6.6L25 5H30V11.4L26 12.4L22.4 11.2L17.6 13.4z" fill="#fff" stroke="#333" stroke-width="1"/><path d="M16.4 11.4L20 7.6M18 12.2L21.6 8.4M19.8 12.6L23 9.2" stroke="#555" stroke-width=".8"/><rect x="30" y="4.6" width="2.4" height="7.2" fill="#000"/><path d="M35.8 30V36H29.8z" fill="#858585" stroke="#6a6a6a" stroke-width=".7" stroke-linejoin="round"/></svg>
<div class="r" style="left:92px;top:196px;width:1371px;height:714px;overflow:hidden;background:#9da3aa;">
<svg width="1371" height="714" viewBox="92 196 1371 714" style="left:0;top:0;font-family:'Liberation Sans',sans-serif">
<defs>
<pattern id="brk" width="8.4" height="8.4" patternUnits="userSpaceOnUse"><rect width="8.4" height="8.4" fill="#fcfcfc"/><path d="M0 .5H8.4M0 4.7H8.4" stroke="#858585" stroke-width=".9" fill="none"/><path d="M.5 0V4.2M4.7 0V4.2M2.6 4.2V8.4M6.8 4.2V8.4" stroke="#a9a9a9" stroke-width="1" fill="none"/></pattern>
<pattern id="brk2" width="6.6" height="8.4" patternUnits="userSpaceOnUse"><rect width="6.6" height="8.4" fill="#fcfcfc"/><path d="M0 .5H6.6M0 4.7H6.6" stroke="#7e7e7e" stroke-width=".9" fill="none"/><path d="M.5 0V4.2M3.8 0V4.2M2.1 4.2V8.4M5.4 4.2V8.4" stroke="#b4b4b4" stroke-width="1.1" fill="none"/></pattern>
<pattern id="tile" width="7.2" height="5.6" patternUnits="userSpaceOnUse"><rect width="7.2" height="5.6" fill="#fafafa"/><path d="M0 .4H7.2M0 3.2H7.2" stroke="#9c9c9c" stroke-width=".8" fill="none"/><path d="M.5 0V2.8M4.1 0V2.8M2.3 2.8V5.6M5.9 2.8V5.6" stroke="#cdcdcd" stroke-width="1" fill="none"/></pattern>
<pattern id="brkv" width="8.4" height="6.6" patternUnits="userSpaceOnUse"><rect width="8.4" height="6.6" fill="#fcfcfc"/><path d="M.5 0V6.6M4.7 0V6.6" stroke="#7e7e7e" stroke-width=".9" fill="none"/><path d="M0 .5H4.2M0 3.8H4.2M4.2 2.1H8.4M4.2 5.4H8.4" stroke="#b4b4b4" stroke-width="1.1" fill="none"/></pattern>
<pattern id="vl" width="2.4" height="4" patternUnits="userSpaceOnUse"><rect width="2.4" height="4" fill="#e9e9e9"/><path d="M.5 0V4" stroke="#9b9b9b" stroke-width=".8"/></pattern>
<pattern id="hl" width="4" height="2.4" patternUnits="userSpaceOnUse"><rect width="4" height="2.4" fill="#ececec"/><path d="M0 .5H4" stroke="#a2a2a2" stroke-width=".8"/></pattern>
<pattern id="flr" width="4" height="1.9" patternUnits="userSpaceOnUse"><rect width="4" height="1.9" fill="#fbfbfb"/><path d="M0 .5H4" stroke="#ebebeb" stroke-width=".7"/></pattern>
<pattern id="spk" width="5" height="5" patternUnits="userSpaceOnUse"><rect width="5" height="5" fill="#ececec"/><path d="M1 1h.8M3.5 2.2h.8M1.8 3.8h.8M4 4.4h.6M.2 2.8h.6" stroke="#b4b4b4" stroke-width=".8"/></pattern>
<pattern id="ter" width="5.2" height="5.2" patternUnits="userSpaceOnUse"><path d="M.5 0V5.2M0 .5H5.2" stroke="#f1f1f1" stroke-width=".8" fill="none"/></pattern>
</defs>
<path d="M79.00 196V910M97.75 196V910M116.50 196V910M154.00 196V910M172.75 196V910M191.50 196V910M210.25 196V910M247.75 196V910M266.50 196V910M285.25 196V910M304.00 196V910M341.50 196V910M360.25 196V910M379.00 196V910M397.75 196V910M435.25 196V910M454.00 196V910M472.75 196V910M491.50 196V910M529.00 196V910M547.75 196V910M566.50 196V910M585.25 196V910M622.75 196V910M641.50 196V910M660.25 196V910M679.00 196V910M716.50 196V910M735.25 196V910M754.00 196V910M772.75 196V910M810.25 196V910M829.00 196V910M847.75 196V910M866.50 196V910M904.00 196V910M922.75 196V910M941.50 196V910M960.25 196V910M997.75 196V910M1016.50 196V910M1035.25 196V910M1054.00 196V910M1091.50 196V910M1110.25 196V910M1129.00 196V910M1147.75 196V910M1185.25 196V910M1204.00 196V910M1222.75 196V910M1241.50 196V910M1279.00 196V910M1297.75 196V910M1316.50 196V910M1335.25 196V910M1372.75 196V910M1391.50 196V910M1410.25 196V910M1429.00 196V910M1466.50 196V910M92 185.75H1463M92 204.50H1463M92 223.25H1463M92 260.75H1463M92 279.50H1463M92 298.25H1463M92 317.00H1463M92 354.50H1463M92 373.25H1463M92 392.00H1463M92 410.75H1463M92 448.25H1463M92 467.00H1463M92 485.75H1463M92 504.50H1463M92 542.00H1463M92 560.75H1463M92 579.50H1463M92 598.25H1463M92 635.75H1463M92 654.50H1463M92 673.25H1463M92 692.00H1463M92 729.50H1463M92 748.25H1463M92 767.00H1463M92 785.75H1463M92 823.25H1463M92 842.00H1463M92 860.75H1463M92 879.50H1463M92 917.00H1463" stroke="#939aa1" stroke-width="1" fill="none"/>
<path d="M135.25 196V910M229.00 196V910M322.75 196V910M416.50 196V910M510.25 196V910M604.00 196V910M697.75 196V910M791.50 196V910M885.25 196V910M979.00 196V910M1072.75 196V910M1166.50 196V910M1260.25 196V910M1354.00 196V910M1447.75 196V910M92 242.00H1463M92 335.75H1463M92 429.50H1463M92 523.25H1463M92 617.00H1463M92 710.75H1463M92 804.50H1463M92 898.25H1463" stroke="#81868c" stroke-width="1.1" fill="none"/>
<path d="M229 196V804.5M222.5 774.6L229 764.6L235.6 774.6" stroke="#4b9b4b" stroke-width="2.2" fill="none"/>
<path d="M229 804.5H1463M259.4 798.1L269.4 804.6L259.4 811" stroke="#9c4646" stroke-width="2.2" fill="none"/>
<rect x="575" y="190" width="413.7" height="109.7" fill="#fff"/>
<rect x="272.8" y="394.6" width="173.7" height="282.4" fill="#fff"/>
<rect x="522.7" y="382" width="609.3" height="266.0" fill="#fff"/>
<rect x="1200.8" y="359.3" width="159.2" height="300.0" fill="#fff"/>
<rect x="583.8" y="730.3" width="413.2" height="162.5" fill="#fff"/>
<g>
<rect x="678.3" y="196" width="217.5" height="56.3" fill="url(#brk)"/>
<rect x="678.3" y="252.3" width="217.5" height="36.6" fill="url(#tile)"/>
<path d="M678.3 252.5H895.8" stroke="#777" stroke-width="1"/>
<rect x="671.5" y="196" width="4.2" height="102" fill="#c4c4c4" stroke="#9a9a9a" stroke-width=".6"/>
<rect x="682" y="194" width="71.2" height="26.6" fill="#fff" stroke="#a2a2a2" stroke-width="2.6"/>
<path d="M705.8 196V221M730 196V221" stroke="#ababab" stroke-width="4"/><path d="M705.8 196V221" stroke="#ddd" stroke-width="1"/>
<rect x="779.2" y="194" width="7.5" height="22.4" fill="#f4f4f4" stroke="#aaa" stroke-width="1"/>
<rect x="779.2" y="222.5" width="7.5" height="23" fill="#f4f4f4" stroke="#aaa" stroke-width="1"/>
<rect x="779.2" y="260.4" width="7.5" height="10" fill="#fff" stroke="#aaa" stroke-width="1"/>
<rect x="861.9" y="194" width="7.5" height="22.4" fill="#f4f4f4" stroke="#aaa" stroke-width="1"/>
<rect x="861.9" y="222.5" width="7.5" height="23" fill="#f4f4f4" stroke="#aaa" stroke-width="1"/>
<rect x="861.9" y="260.4" width="7.5" height="10" fill="#fff" stroke="#aaa" stroke-width="1"/>
<rect x="812.4" y="194" width="23.7" height="23" fill="#bfbfbf" stroke="#a2a2a2" stroke-width=".8"/><path d="M819 196V217M819 196L836 217" stroke="#aaa" stroke-width=".8"/>
<rect x="895.8" y="221" width="2" height="41" fill="#ccc"/>
</g>
<g>
<rect x="600" y="860.4" width="378" height="18.6" fill="#f3f3f3" stroke="#c4c4c4" stroke-width=".7"/>
<rect x="678.3" y="741.7" width="217" height="35.5" fill="url(#tile)"/>
<rect x="678.3" y="777.2" width="217" height="31.4" fill="url(#brk2)"/>
<rect x="753.5" y="808.6" width="141.8" height="49.2" fill="url(#brk2)"/><rect x="753.5" y="857.8" width="141.8" height="2.6" fill="#d9d9d9"/>
<rect x="678.3" y="808.6" width="75.2" height="51.8" fill="#fff"/>
<path d="M678.3 808.8H895.3M678.3 782.3H895.3" stroke="#8a8a8a" stroke-width="1.1"/>
<rect x="895.3" y="766" width="1.6" height="52" fill="#ccc"/>
<rect x="671.7" y="731.6" width="5" height="129" fill="#bdbdbd" stroke="#8f8f8f" stroke-width=".7"/>
<rect x="680.2" y="810.5" width="23.9" height="45" fill="#fff" stroke="#8e8e8e" stroke-width="1.6"/>
<rect x="709.4" y="810.5" width="19.9" height="45" fill="#fff" stroke="#8e8e8e" stroke-width="1.6"/>
<rect x="732.5" y="810.5" width="20.2" height="45" fill="#fff" stroke="#8e8e8e" stroke-width="1.6"/>
<rect x="704.1" y="809" width="5.3" height="51" fill="#bcbcbc"/>
<rect x="779.2" y="760.8" width="8.8" height="8.8" fill="#fff" stroke="#b5b5b5" stroke-width=".9"/>
<rect x="807.3" y="760.8" width="8.8" height="8.8" fill="#fff" stroke="#b5b5b5" stroke-width=".9"/>
<rect x="861" y="760.8" width="8.8" height="8.8" fill="#fff" stroke="#b5b5b5" stroke-width=".9"/>
<rect x="778.2" y="784.4" width="9.8" height="53.8" fill="#eeeeee" stroke="#888" stroke-width="1.2"/><rect x="778.2" y="809.8" width="9.8" height="3.8" fill="#fff" stroke="#888" stroke-width=".9"/>
<rect x="860.6" y="784.4" width="9.8" height="53.8" fill="#eeeeee" stroke="#888" stroke-width="1.2"/><rect x="860.6" y="809.8" width="9.8" height="3.8" fill="#fff" stroke="#888" stroke-width=".9"/>
<rect x="667.7" y="838.6" width="40.3" height="21.8" fill="url(#spk)" stroke="#b5b5b5" stroke-width=".6"/>
<rect x="611.2" y="837.8" width="38.5" height="23.9" fill="url(#spk)" stroke="#8f8f8f" stroke-width=".8"/><rect x="613" y="856.5" width="55" height="5" fill="#fff" stroke="#aaa" stroke-width=".6"/><rect x="611.5" y="838.2" width="13.5" height="18" fill="#9a9a9a" opacity=".45"/>
<rect x="625.2" y="841" width="23.1" height="14.6" fill="url(#vl)" stroke="#777" stroke-width=".8"/><rect x="625.2" y="841" width="23.1" height="14.6" fill="#777" opacity=".35"/>
<rect x="897.1" y="817.4" width="30" height="43" fill="url(#vl)" stroke="#aaa" stroke-width=".7"/><rect x="897.1" y="817.4" width="31.5" height="3" fill="#ddd" stroke="#aaa" stroke-width=".5"/>
<path d="M953.7 860.4V843.5h4.5V840h5v-4h9v24.4" fill="#fff" stroke="#b0b0b0" stroke-width=".7"/><rect x="953.6" y="843.5" width="2.6" height="17" fill="#aaa" stroke="#666" stroke-width=".5"/>
<text x="600.4" y="885.8" font-size="5.6" font-weight="700" fill="#222" textLength="35.5" lengthAdjust="spacingAndGlyphs">West Elevation</text><path d="M600.4 887.3H646" stroke="#bbb" stroke-width=".6"/>
</g>
<g>
<path d="M292.4 409H298L306.4 470V590L298 647.3H292.4z" fill="#f1f1f1" stroke="#c2c2c2" stroke-width=".7"/>
<text transform="translate(285.8,409.2) rotate(90)" font-size="5.6" font-weight="700" fill="#222" textLength="43" lengthAdjust="spacingAndGlyphs">North Elevation</text><path d="M284.7 409V455" stroke="#bbb" stroke-width=".6"/>
<path d="M297.5 421H339L351.3 482H297.5z" fill="url(#vl)" stroke="#9a9a9a" stroke-width=".7"/>
<rect x="297.5" y="410.4" width="16" height="10.6" fill="#ddd"/><path d="M313.5 412.5H340M340 410.4L351.3 482M343 411L353.5 481" stroke="#777" stroke-width=".8" fill="none"/>
<path d="M299 435H334V463H299zM299 435L334 463M334 435L299 463" stroke="#aaa" stroke-width=".7" fill="none"/>
<rect x="306.4" y="482" width="5" height="6" fill="#ddd" stroke="#aaa" stroke-width=".5"/>
<rect x="306.4" y="487.5" width="25.3" height="46.3" fill="url(#spk)" stroke="#c0c0c0" stroke-width=".5"/>
<rect x="313.5" y="567.4" width="18.2" height="49.1" fill="url(#spk)" stroke="#c0c0c0" stroke-width=".5"/>
<rect x="331.7" y="515.5" width="24.6" height="5.1" fill="#c2c2c2"/>
<path d="M331.7 524H359.7M331.7 527H357M357 524V612M359.7 524V612M331.7 566H357M331.7 570H357M331.7 578H357M331.7 604H357M331.7 608H357" stroke="#b0b0b0" stroke-width="1" fill="none"/>
<path d="M314.5 557V566H331.7z" fill="#cfcfcf"/>
<path d="M359.7 524H390.5L423.6 568.8L390.5 612.3H359.7z" fill="url(#brkv)" stroke="#777" stroke-width=".9"/>
<rect x="375.1" y="561.2" width="28.1" height="16" fill="#fff" stroke="#aaa" stroke-width="1.2"/>
<rect x="331.7" y="587" width="100" height="5.6" fill="#e5e5e5" stroke="#999" stroke-width=".7"/><rect x="429.5" y="586.6" width="4.6" height="6.4" fill="#fff" stroke="#555" stroke-width=".8"/>
<path d="M307 647V626L311 595M311 625H330V643H311" stroke="#ccc" stroke-width=".7" fill="none"/>
</g>
<g>
<rect x="1326.6" y="409.9" width="19.4" height="231" fill="#f1f1f1" stroke="#b9b9b9" stroke-width=".7"/>
<text transform="translate(1354.3,640.5) rotate(-90)" font-size="5.6" font-weight="700" fill="#222" textLength="34" lengthAdjust="spacingAndGlyphs">South Elevation</text><path d="M1352.6 600V641" stroke="#bbb" stroke-width=".6"/>
<path d="M1298 416H1326V481H1289.5z" fill="url(#hl)" stroke="#aaa" stroke-width=".6"/><path d="M1298 414.5L1288.7 481.2M1300.5 414.5L1291.5 481" stroke="#888" stroke-width=".8" stroke-dasharray="2 1"/><path d="M1298 415.5H1326" stroke="#888" stroke-width=".8"/>
<rect x="1308.8" y="486.7" width="17.2" height="13" fill="url(#spk)" stroke="#bbb" stroke-width=".5"/><rect x="1310" y="499.7" width="16" height="14" fill="#d5d5d5" stroke="#aaa" stroke-width=".5"/><rect x="1316" y="503" width="7" height="10" fill="#aaa"/>
<rect x="1284.4" y="513.2" width="41.6" height="7" fill="#c4c4c4"/>
<path d="M1326.6 520.8H1254L1219.6 565.6L1254 612.3H1326.6z" fill="url(#brkv)" stroke="#777" stroke-width=".9"/>
<rect x="1244.9" y="561.3" width="63.9" height="10" fill="#f6f6f6" stroke="#000" stroke-width="1.1"/><path d="M1280.5 561.3V571.3M1282.2 561.3V571.3" stroke="#444" stroke-width=".9"/>
<rect x="1209.8" y="583.4" width="24" height="4.2" fill="#e0e0e0" stroke="#999" stroke-width=".7"/>
<rect x="1316" y="632" width="10.6" height="4.5" rx="1.5" fill="#f4f4f4" stroke="#999" stroke-width=".7"/>
</g>
<g>
<rect x="608" y="482" width="72" height="118" fill="url(#ter)"/>
<path d="M596 468.7H731.7V473H600V518H596zM731.7 468.7V498H754M608 482H645V492H622V516H610V600H680M610 492H622M600 473H730" stroke="#e4e4e4" stroke-width="1" fill="none"/>
<path d="M612 486H643V492H620V500H612z" fill="#e2e2e2"/><rect x="610.5" y="500" width="10" height="16" fill="#fff" stroke="#d2d2d2" stroke-width=".8"/>
<path d="M735 472V498M741 472V498M747 472V498M753 472V498M759 472V498M765 472V498M771 472V498" stroke="#ebebeb" stroke-width=".8"/>
<rect x="806.7" y="474.5" width="11.3" height="20.5" fill="#e8e8e8"/>
<rect x="819.8" y="474.5" width="11.3" height="20.5" fill="#e8e8e8"/>
<rect x="832.9" y="474.5" width="11.3" height="20.5" fill="#e8e8e8"/>
<rect x="846.0" y="474.5" width="11.3" height="20.5" fill="#e8e8e8"/>
<rect x="859.1" y="474.5" width="11.3" height="20.5" fill="#e8e8e8"/>
<rect x="872.2" y="474.5" width="11.3" height="20.5" fill="#e8e8e8"/>
<rect x="885.3" y="474.5" width="11.3" height="20.5" fill="#e8e8e8"/>
<rect x="898.4" y="474.5" width="11.3" height="20.5" fill="#e8e8e8"/>
<rect x="911.5" y="474.5" width="11.3" height="20.5" fill="#e8e8e8"/>
<rect x="754.5" y="500" width="11" height="16.5" fill="#e6e6e6"/>
<rect x="767.3" y="500" width="11" height="16.5" fill="#e6e6e6"/>
<rect x="780.1" y="500" width="11" height="16.5" fill="#e6e6e6"/>
<rect x="792.9" y="500" width="11" height="16.5" fill="#e6e6e6"/>
<path d="M810 515L836 509.5V520.5H810z" fill="#e4e4e4" stroke="#d0d0d0" stroke-width=".6"/>
<rect x="706.8" y="613" width="44.7" height="10.2" fill="#e4e4e4"/>
<path d="M664.5 564.5H685V572.5H668V614.5H705M664.5 564.5V620.5H706" stroke="#c9c9c9" stroke-width="1" fill="none"/><rect x="671" y="579" width="9" height="18" fill="#fafafa" stroke="#d4d4d4" stroke-width=".8"/><circle cx="673.5" cy="588.5" r="2.6" fill="none" stroke="#ddd" stroke-width=".7"/>
<path d="M792.7 408.40000000000003H877.7M792.7 410.2H877.7" stroke="#333" stroke-width=".6"/>
<rect x="791.2" y="407.7" width="3.2" height="3.2" fill="#111"/>
<rect x="812.8" y="407.7" width="3.2" height="3.2" fill="#111"/>
<rect x="833.5" y="407.7" width="3.2" height="3.2" fill="#111"/>
<rect x="854.2" y="407.7" width="3.2" height="3.2" fill="#111"/>
<rect x="875.2" y="407.7" width="3.2" height="3.2" fill="#111"/>
<path d="M792.7 469.1H877.7M792.7 470.9H877.7" stroke="#333" stroke-width=".6"/>
<rect x="791.2" y="468.4" width="3.2" height="3.2" fill="#111"/>
<rect x="812.8" y="468.4" width="3.2" height="3.2" fill="#111"/>
<rect x="833.5" y="468.4" width="3.2" height="3.2" fill="#111"/>
<rect x="854.2" y="468.4" width="3.2" height="3.2" fill="#111"/>
<rect x="875.2" y="468.4" width="3.2" height="3.2" fill="#111"/>
<rect x="896.8" y="409.3" width="27" height="61" fill="none" stroke="#0a0a0a" stroke-width="2.4"/>
<path d="M924 422H914M916 422V428M909 457.5V469.5M909 457.5H898M887 427L892 425M887 453L892 451" stroke="#999" stroke-width=".8" fill="none"/><path d="M896.8 421V425M896.8 452V458" stroke="#000" stroke-width="3.4"/>
<text x="831.5" y="439.8" font-size="5.5" font-weight="700" fill="#333">7</text><text x="653" y="516" font-size="5.5" font-weight="700" fill="#333">6</text>
<path d="M926 470H970" stroke="#eee" stroke-width=".8"/>
<rect x="682.4" y="523.7" width="106" height="85.7" fill="url(#flr)"/>
<rect x="838.5" y="552" width="54" height="57.4" fill="url(#flr)"/>
<rect x="803.8" y="523.7" width="32.4" height="32" fill="url(#flr)"/>
<rect x="841" y="555" width="17" height="54" fill="#fff"/>
<rect x="753.3" y="542" width="18.2" height="48.8" fill="#dcdcdc" stroke="#cfcfcf" stroke-width=".6"/>
<circle cx="751" cy="547" r="2.4" fill="#fff" stroke="#ddd" stroke-width=".6"/>
<circle cx="751" cy="558" r="2.4" fill="#fff" stroke="#ddd" stroke-width=".6"/>
<circle cx="751" cy="569" r="2.4" fill="#fff" stroke="#ddd" stroke-width=".6"/>
<circle cx="751" cy="580" r="2.4" fill="#fff" stroke="#ddd" stroke-width=".6"/>
<circle cx="762" cy="592.5" r="2.4" fill="#fff" stroke="#ddd" stroke-width=".6"/>
<rect x="720.6" y="546" width="15.8" height="40" fill="#fcfcfc" stroke="#dcdcdc" stroke-width=".9"/><path d="M733 546V586M720.6 560H733M720.6 573H733" stroke="#e0e0e0" stroke-width=".8"/>
<rect x="696" y="531.7" width="16.3" height="15.8" fill="#fcfcfc" stroke="#dcdcdc" stroke-width=".9"/><rect x="698.5" y="554" width="12" height="23" fill="#fcfcfc" stroke="#e3e3e3" stroke-width=".8"/>
<rect x="789.5" y="550" width="11" height="14" fill="#eee" stroke="#d5d5d5" stroke-width=".6"/><rect x="789.5" y="572" width="11" height="14" fill="#e6e6e6" stroke="#d5d5d5" stroke-width=".6"/><rect x="789.5" y="594" width="11" height="14" fill="#fff"/>
<rect x="842.5" y="524.5" width="15" height="9" fill="#d9d9d9"/><rect x="862" y="526" width="8" height="10" fill="#f0f0f0" stroke="#ddd" stroke-width=".6"/><rect x="877" y="524" width="15" height="25" fill="#f6f6f6" stroke="#e3e3e3" stroke-width=".5"/>
<rect x="876" y="572" width="16" height="36" fill="#fbfbfb" stroke="#e0e0e0" stroke-width=".7"/><rect x="804.5" y="561" width="5" height="22" fill="#e3e3e3"/>
<path d="M820 609L806 598M820 609L810 592M820 609L816 590M820 609L824 590M820 609L830 592M820 609L835 598M806 609A14 14 0 0 1 834 609M811 609A9 9 0 0 1 829 609" stroke="#bdbdbd" stroke-width=".7" fill="none"/>
<rect x="679.7" y="520.7" width="215.8" height="91.6" fill="none" stroke="#c40000" stroke-width="1.5"/>
<path d="M682.6 609.3V523.8H754M682.6 609.3H754M705.4 521V612" fill="none" stroke="#c40000" stroke-width="1.3"/>
<rect x="788.6" y="538.7" width="13" height="70.6" fill="none" stroke="#c40000" stroke-width="1.2"/>
<path d="M753.6 522.3H777.5M788 522.3H810.7M836.2 522.3H860.3M871.3 522.3H895.6M753.6 610.8H777.5M801.8 610.8H860.3M871.3 610.8H895.6" stroke="#160000" stroke-width="3" fill="none"/>
<path d="M777.5 522.3H788M860.3 522.3H871.3M777.5 610.8H788M860.3 610.8H871.3M810.7 521H819.7" stroke="#c40000" stroke-width="1"/>
<path d="M894.1 521V561.3M894.1 571.5V612" stroke="#300" stroke-width="3"/><rect x="892.6" y="561.3" width="3" height="10.2" fill="#fff" stroke="#c40000" stroke-width=".8"/>
<path d="M837.3 523.7V609.4" stroke="#5a0000" stroke-width="2.6"/><path d="M838 550.8H892.6" stroke="#5a0000" stroke-width="2.6"/>
<path d="M875.5 523.7V551" stroke="#8a0000" stroke-width="2"/><path d="M875.5 535V540" stroke="#fff" stroke-width="2.2"/>
<path d="M802.8 540V609.4" stroke="#8a0000" stroke-width="2.2"/>
<path d="M803.8 558.8H820.3V540.5H816.8V556.3H803.8M817.5 540.5H820" stroke="#c40000" stroke-width="1.4" fill="none"/><path d="M803.8 560H820" stroke="#222" stroke-width="1"/>
<path d="M803.8 585.2H820.2M820.2 581.2V593" stroke="#a00000" stroke-width="2.2"/>
<path d="M840 524V534H842.5V524" stroke="#c40000" stroke-width="1.2" fill="none"/>
<path d="M819.7 521.5A15.8 15.8 0 0 0 835.5 538.5" stroke="#c40000" stroke-width="1" fill="none"/>
<path d="M838.5 536.5A13 13 0 0 1 851.8 549.6" stroke="#c40000" stroke-width="1" fill="none"/>
<path d="M838.5 558.5H851.3A13 13 0 0 1 838.5 571.8" stroke="#c40000" stroke-width="1" fill="none"/>
<circle cx="804.1" cy="540.3" r="2.7" fill="#fff" stroke="#c40000" stroke-width="1"/><circle cx="790.8" cy="608.8" r="2.8" fill="#fff" stroke="#c40000" stroke-width="1"/>
<rect x="752.6" y="523.3" width="3" height="2.2" fill="#300"/><rect x="752.6" y="607.6" width="3" height="2.2" fill="#300"/><rect x="702.5" y="521" width="3" height="4" fill="#333"/><rect x="702.5" y="608" width="3" height="4" fill="#333"/>
<text x="814.3" y="533.8" font-size="5.6" font-weight="700" fill="#222">1</text>
<text x="778.6" y="569.5" font-size="5.6" font-weight="700" fill="#222">2</text>
<text x="702.3" y="569.5" font-size="5.6" font-weight="700" fill="#222">3</text>
<text x="857.8" y="542" font-size="5.6" font-weight="700" fill="#222">4</text>
<text x="863.7" y="581.8" font-size="5.6" font-weight="700" fill="#222">5</text>
<circle cx="1032.3" cy="466.7" r="11.5" fill="none" stroke="#cfcfcf" stroke-width=".8"/><path d="M1024.2 458.6L1040.4 474.8M1040.4 458.6L1024.2 474.8" stroke="#cfcfcf" stroke-width=".8"/>
<text transform="translate(1016.5,451.5) rotate(-38)" font-size="8" font-weight="700" font-style="italic" fill="#333">N</text>
<path d="M1020 489.6H1038.5M1057 489.6H1075.5" stroke="#111" stroke-width="1.8"/><path d="M1038.5 488.2H1057M1075.5 488.2H1094" stroke="#111" stroke-width="1.8"/><path d="M1095 489.2H1114" stroke="#111" stroke-width="1.8" stroke-dasharray="2.2 1"/><path d="M1020 487.5H1094" stroke="#555" stroke-width=".5"/>
<path d="M1020.5 492.5v1M1039 492.5v1M1057.5 492.5v1M1076 492.5v1M1094.5 492.5v1M1113 492.5v1" stroke="#999" stroke-width=".7"/>
<text x="1021.2" y="509.2" font-size="5.4" font-style="italic" fill="#333">1</text><text x="1041" y="509.2" font-size="5.6" font-style="italic" fill="#222" textLength="15" lengthAdjust="spacingAndGlyphs">Entry</text>
<text x="1021.2" y="520.0" font-size="5.4" font-style="italic" fill="#333">2</text><text x="1041" y="520.0" font-size="5.6" font-style="italic" fill="#222" textLength="20" lengthAdjust="spacingAndGlyphs">Kitchen</text>
<text x="1021.2" y="530.9" font-size="5.4" font-style="italic" fill="#333">3</text><text x="1041" y="530.9" font-size="5.6" font-style="italic" fill="#222" textLength="15.5" lengthAdjust="spacingAndGlyphs">Living</text>
<text x="1021.2" y="541.7" font-size="5.4" font-style="italic" fill="#333">4</text><text x="1041" y="541.7" font-size="5.6" font-style="italic" fill="#222" textLength="28" lengthAdjust="spacingAndGlyphs">Bathroom</text>
<text x="1021.2" y="552.5" font-size="5.4" font-style="italic" fill="#333">5</text><text x="1041" y="552.5" font-size="5.6" font-style="italic" fill="#222" textLength="33" lengthAdjust="spacingAndGlyphs">Bunk Room</text>
<text x="1021.2" y="563.4" font-size="5.4" font-style="italic" fill="#333">6</text><text x="1041" y="563.4" font-size="5.6" font-style="italic" fill="#222" textLength="47" lengthAdjust="spacingAndGlyphs">Northern Terrace</text>
<text x="1021.2" y="574.2" font-size="5.4" font-style="italic" fill="#333">7</text><text x="1041" y="574.2" font-size="5.6" font-style="italic" fill="#222" textLength="24" lengthAdjust="spacingAndGlyphs">Car Port</text>
<text x="1021.2" y="585.0" font-size="5.4" font-style="italic" fill="#333">8</text><text x="1041" y="585.0" font-size="5.6" font-style="italic" fill="#222" textLength="46" lengthAdjust="spacingAndGlyphs">Office/ Bedroom</text>
<text x="1021.2" y="595.8" font-size="5.4" font-style="italic" fill="#333">9</text><text x="1041" y="595.8" font-size="5.6" font-style="italic" fill="#222" textLength="26" lengthAdjust="spacingAndGlyphs">Bedroom</text>
<text x="1020.8" y="606.7" font-size="5.4" font-style="italic" fill="#333">10</text><text x="1041" y="606.7" font-size="5.6" font-style="italic" fill="#222" textLength="18" lengthAdjust="spacingAndGlyphs">Ensuite</text>
</g>
<path d="M679.5 196V520.5M777.5 196V520.5M777.5 612.5V838M787.5 196V520.5M787.5 612.5V838M860.5 196V520.5M860.5 612.5V838M871.5 196V520.5M871.5 612.5V838M895.5 196V520.5M895.5 612.5V861M753.5 612.5V860.5M332.5 520.5H679.5M895.5 520.5H1326.5V612.5H895.5M332.5 612.5H679.5M332.5 616.5H706M895.5 561.5H1308.5V571.5H895.5" stroke="#000" stroke-width="1.1" fill="none"/>
<path d="M136.5 829V866.6H172.7" stroke="#585858" stroke-width="1.1" fill="none"/>
<text x="139" y="829.3" font-size="17" fill="#585858">y</text><text x="175.6" y="867.6" font-size="17" fill="#585858">x</text>
</svg>
<div class="r" style="left:0;top:0;width:130px;height:23px;background:#6ea6ff;border-radius:0 0 4px 0;"></div>
</div>
<div class="r" style="left:1463px;top:196px;width:1px;height:715px;background:#c9cfe4;"></div><div class="r" style="left:92px;top:910px;width:1372px;height:1px;background:#c9cfe4;"></div>
<span class="t" style="left:101.00px;top:197.72px;font-size:15.5px;letter-spacing:-0.537px;color:#1e2330;font-weight:700;">alc- nascente*</span>
<div class="r" style="left:208px;top:198.5px;width:1px;height:19.0px;background:#1a1a1a;"></div>
<svg width="12" height="8" style="left:209px;top:203px"><path d="M1 1.2h9.4l-4.7 5z" fill="#222"/></svg>
<div class="r" style="left:91px;top:912px;width:112.4px;height:25.399999999999977px;background:#eff0f5;border:1px solid #c5cbe0;border-top:none;border-radius:0 0 6px 6px;box-sizing:border-box;"></div>
<span class="t" style="left:105.25px;top:915.97px;font-size:15.5px;letter-spacing:-0.349px;color:#222;">alc- nascente</span>
<span class="t" style="left:214.25px;top:915.97px;font-size:15.5px;letter-spacing:-0.698px;color:#77787c;">Perspective</span>
<span class="t" style="left:311.25px;top:915.97px;font-size:15.5px;letter-spacing:-0.418px;color:#77787c;">Front</span>
<span class="t" style="left:366.25px;top:915.97px;font-size:15.5px;letter-spacing:-0.233px;color:#77787c;">Right</span>
<div class="r" style="left:299.2px;top:913px;width:1.3000000000000114px;height:23.799999999999955px;background:#cdbf10;"></div>
<div class="r" style="left:355.2px;top:913px;width:1.3000000000000114px;height:23.799999999999955px;background:#cdbf10;"></div>
<div class="r" style="left:412.2px;top:913px;width:1.0px;height:23.799999999999955px;background:#e6e08a;"></div>
<svg width="14" height="14" style="left:424px;top:918.6px"><path d="M5.4 2.2h2.6v3.4h3.4v2.6h-3.4v3.4h-2.6v-3.4h-3.4v-2.6h3.4z" fill="#fafafa" stroke="#555" stroke-width="1"/></svg>
<div class="r" style="left:1467px;top:194px;width:450px;height:744px;background:#dcdde1;border-radius:8px 8px 0 0;"></div>
<div class="r" style="left:1467px;top:194px;width:450px;height:23px;background:#ebecf0;border-radius:8px 8px 0 0;"></div>
<div class="r" style="left:1467px;top:217px;width:426px;height:721px;background:#ebecf0;"></div>
<div class="r" style="left:1893px;top:354px;width:24px;height:44px;background:#ebecf0;border-radius:0 7px 7px 0;"></div>
<span class="t" style="left:1468.10px;top:196.72px;font-size:16px;letter-spacing:-0.891px;color:#6a6b70;">Named Views</span>
<svg width="16" height="16" style="left:1897.5px;top:198.5px"><g transform="translate(8,8)"><rect x="-1.6" y="-7.2" width="3.2" height="3.4" fill="#d0d1d6" transform="rotate(0)"/><rect x="-1.6" y="-7.2" width="3.2" height="3.4" fill="#d0d1d6" transform="rotate(45)"/><rect x="-1.6" y="-7.2" width="3.2" height="3.4" fill="#d0d1d6" transform="rotate(90)"/><rect x="-1.6" y="-7.2" width="3.2" height="3.4" fill="#d0d1d6" transform="rotate(135)"/><rect x="-1.6" y="-7.2" width="3.2" height="3.4" fill="#d0d1d6" transform="rotate(180)"/><rect x="-1.6" y="-7.2" width="3.2" height="3.4" fill="#d0d1d6" transform="rotate(225)"/><rect x="-1.6" y="-7.2" width="3.2" height="3.4" fill="#d0d1d6" transform="rotate(270)"/><rect x="-1.6" y="-7.2" width="3.2" height="3.4" fill="#d0d1d6" transform="rotate(315)"/><circle r="4.4" fill="none" stroke="#d0d1d6" stroke-width="2.4"/></g></svg>
<div class="r" style="left:1467px;top:260px;width:420px;height:572px;background:#fff;border:1px solid #8a8d94;border-right-color:#b9bbc2;border-bottom-color:#b9bbc2;box-sizing:border-box;"></div>
<svg width="452" height="760" viewBox="1467 190 452 760" style="left:1467px;top:190px;font-family:'Liberation Sans',sans-serif">
<defs><pattern id="tt" width="2.2" height="2.2" patternUnits="userSpaceOnUse"><rect width="2.2" height="2.2" fill="#f0f0f0"/><path d="M0 .4H2.2M.4 0V2.2" stroke="#c4c4c4" stroke-width=".6"/></pattern></defs>
<rect x="1471" y="299.7" width="149.3" height="76" fill="#9da3aa" stroke="#7d838a" stroke-width="1"/>
<rect x="1485.2" y="321.4" width="93.8" height="49.6" fill="#fff"/>
<path d="M1500.5 360V336L1514 326.5L1528.5 337.5V360z" fill="url(#tt)" stroke="#999" stroke-width=".6"/><rect x="1512.5" y="335" width="3.6" height="20" fill="#fff" stroke="#999" stroke-width=".6"/><path d="M1507.7 324V330" stroke="#999" stroke-width=".8"/>
<rect x="1491.5" y="360.5" width="72" height="5.5" fill="#f0f0f0" stroke="#ccc" stroke-width=".5"/><path d="M1500.5 360.3H1528.5" stroke="#111" stroke-width="1.2"/>
<path d="M1541 360V350H1561V360M1541 352H1561M1545 352V360M1549 352V360M1553 352V360M1557 352V360" stroke="#bbb" stroke-width=".6" fill="none"/><rect x="1528.5" y="347" width="4" height="13" fill="#ddd"/><rect x="1533" y="355" width="6" height="5" fill="#e2e2e2"/>
<path d="M1491.5 367.8H1502" stroke="#888" stroke-width=".7"/>
<rect x="1633.6" y="299.7" width="149.2" height="76" fill="#9da3aa" stroke="#7d838a" stroke-width="1"/>
<rect x="1639.8" y="308.6" width="129.4" height="50.1" fill="#fff"/>
<rect x="1668" y="310.5" width="68" height="38" fill="url(#tt)"/><rect x="1668" y="331" width="68" height="2" fill="#aaa" opacity=".6"/>
<rect x="1669" y="334" width="22" height="14" fill="#f8f8f8" stroke="#bbb" stroke-width=".5"/><path d="M1676 334V348M1683 334V348" stroke="#bbb" stroke-width=".6"/>
<rect x="1700" y="325.5" width="2.8" height="16" fill="#fff" stroke="#999" stroke-width=".5"/><rect x="1725.5" y="325.5" width="2.8" height="16" fill="#fff" stroke="#999" stroke-width=".5"/><rect x="1700" y="318" width="3" height="3" fill="#fff"/><rect x="1709" y="318" width="3" height="3" fill="#fff"/><rect x="1726" y="318" width="3" height="3" fill="#fff"/>
<rect x="1645" y="349.5" width="119" height="5.5" fill="#f1f1f1" stroke="#d0d0d0" stroke-width=".4"/><rect x="1649" y="342" width="12" height="7.5" fill="#ddd" stroke="#bbb" stroke-width=".4"/><rect x="1652.5" y="343.5" width="8" height="4.5" fill="#999"/><rect x="1667" y="343" width="12" height="6.5" fill="#e6e6e6"/><rect x="1738" y="336" width="9" height="13.5" fill="#e6e6e6" stroke="#bbb" stroke-width=".4"/><path d="M1755 349V343H1760V349" stroke="#bbb" stroke-width=".5" fill="none"/>
<path d="M1729.5 299.7V342.3M1737.4 299.7V349.4" stroke="#111" stroke-width="1.2"/><path d="M1645 356.6H1656" stroke="#888" stroke-width=".6"/>
<rect x="1471" y="483.3" width="149.3" height="76" fill="#9da3aa" stroke="#7d838a" stroke-width="1"/>
<rect x="1494" y="493.9" width="85" height="51.1" fill="#fff"/>
<path d="M1534 526V511L1546.5 500L1561 512V526z" fill="url(#tt)" stroke="#999" stroke-width=".6"/><rect x="1541.5" y="506.5" width="7" height="9" fill="#fff" stroke="#aaa" stroke-width=".5"/><path d="M1552.5 497V504" stroke="#999" stroke-width=".7"/><rect x="1547" y="520" width="10" height="8" fill="#fff" stroke="#bbb" stroke-width=".4"/>
<path d="M1499 525L1520 521V535L1499 538zM1499 528L1520 524M1499 531L1520 527.5M1499 534.5L1520 531" fill="#eee" stroke="#999" stroke-width=".6"/><rect x="1521" y="527" width="13" height="8" fill="#eee" stroke="#ccc" stroke-width=".4"/><path d="M1499 538.5L1571 536V532H1534" stroke="#ccc" stroke-width=".5" fill="none"/><path d="M1499 540.6H1509" stroke="#666" stroke-width=".7"/>
<path d="M1532.1 483.3V527" stroke="#222" stroke-width="1.8"/>
<rect x="1633.6" y="483.3" width="149.2" height="76" fill="#9da3aa" stroke="#7d838a" stroke-width="1"/>
<rect x="1639" y="483.8" width="143.3" height="58.5" fill="#fff"/>
<path d="M1658 498H1700V506H1736V497M1663 503H1690V528H1663zM1660 500V525" stroke="#e3e3e3" stroke-width=".8" fill="none"/><rect x="1706" y="497.5" width="34" height="6.5" fill="#e9e9e9"/><rect x="1696" y="505" width="22" height="4.5" fill="#eaeaea"/>
<rect x="1678.5" y="510.6" width="53.8" height="22.3" fill="#fbfbfb" stroke="#b40000" stroke-width="1.1"/><path d="M1706 514V533M1710 512V533M1719 510.6V533M1719 518H1732.5M1710 524H1719M1706 514H1710" stroke="#b40000" stroke-width="1.2" fill="none"/><rect x="1697" y="515" width="5" height="12" fill="#e4e4e4"/><circle cx="1712" cy="514" r="1.4" fill="#fff" stroke="#b40000" stroke-width=".6"/><circle cx="1707.5" cy="532" r="1.4" fill="#fff" stroke="#b40000" stroke-width=".6"/>
<path d="M1733.7 483.8V497.5H1739.6V483.8" stroke="#222" stroke-width=".9" fill="none"/>
<path d="M1765 502H1782M1765 502V532M1770 507h6M1770 511h5M1770 515h4M1770 519h7M1770 523h5M1770 527h8M1770 531h5" stroke="#aaa" stroke-width=".7" fill="none"/><circle cx="1767.5" cy="496.5" r="2.4" fill="none" stroke="#ddd" stroke-width=".6"/><circle cx="1764" cy="492" r=".8" fill="#555"/>
<path d="M1634 533H1782.5" stroke="#222" stroke-width="1.5"/><path d="M1697 533V559M1706 533V559" stroke="#222" stroke-width="1.4"/>
<rect x="1471" y="631.9" width="150.2" height="171" fill="#fff" stroke="#2486ea" stroke-width="1.3"/>
<rect x="1471.6" y="667.2" width="149" height="76.3" fill="#9da3aa"/><path d="M1471.6 667.4H1620.6M1471.6 743.6H1620.6" stroke="#6a6f76" stroke-width=".9"/>
<rect x="1478.6" y="667.8" width="140.4" height="9.8" fill="#fff"/><path d="M1546 671H1568" stroke="#aaa" stroke-width=".9"/><path d="M1573 668V671H1580V668" stroke="#777" stroke-width=".8" fill="none"/>
<rect x="1491.5" y="698" width="105.3" height="44.3" fill="#fff"/>
<rect x="1519" y="701" width="54" height="27.5" fill="url(#tt)"/><rect x="1519" y="712" width="54" height="1.2" fill="#aaa"/><rect x="1519" y="717" width="18" height="11.5" fill="#fbfbfb" stroke="#bbb" stroke-width=".5"/><path d="M1525 717V728.5M1531 717V728.5" stroke="#bbb" stroke-width=".6"/><rect x="1542.5" y="711" width="2.6" height="13" fill="#f4f4f4" stroke="#999" stroke-width=".5"/><rect x="1563.5" y="711" width="2.6" height="13" fill="#f4f4f4" stroke="#999" stroke-width=".5"/><rect x="1552" y="718" width="7" height="10.5" fill="#9a9a9a"/>
<rect x="1497.5" y="730.5" width="95" height="4" fill="#f3f3f3" stroke="#ccc" stroke-width=".4"/><rect x="1500" y="724.5" width="11" height="6" fill="#eee" stroke="#ccc" stroke-width=".4"/><path d="M1585 730V725H1590V730" stroke="#bbb" stroke-width=".5" fill="none"/><path d="M1583 736.5H1591" stroke="#777" stroke-width=".7"/>
<path d="M1518.1 667.2V729.3H1573" stroke="#222" stroke-width="1.4" fill="none"/>
<path d="M1470.6 780.3H1621.6" stroke="#222" stroke-width="1.2"/>
</svg>
<span class="t" style="left:1525.20px;top:415.97px;font-size:15.5px;letter-spacing:-0.465px;color:#222;">alc-sul</span>
<span class="t" style="left:1671.20px;top:415.97px;font-size:15.5px;letter-spacing:-0.188px;color:#222;">alc- poente</span>
<span class="t" style="left:1514.60px;top:599.97px;font-size:15.5px;letter-spacing:-0.156px;color:#222;">alc- norte</span>
<span class="t" style="left:1688.60px;top:599.97px;font-size:15.5px;letter-spacing:-0.366px;color:#222;">planta</span>
<span class="t" style="left:1503.00px;top:783.87px;font-size:15.5px;letter-spacing:-0.490px;color:#222;">alc- nascente</span>
<div class="cb" style="left:1468.4px;top:843.3px;background:#fdfdfe;border-color:#bcc4dd;"></div>
<span class="t" style="left:1489.90px;top:841.77px;font-size:15.5px;letter-spacing:-0.086px;color:#1b1b1b;">Auto-update thumbnails</span>
<div class="cb" style="left:1468.4px;top:868.3px;background:#fdfdfe;border-color:#bcc4dd;"></div>
<span class="t" style="left:1489.90px;top:866.77px;font-size:15.5px;letter-spacing:-0.363px;color:#1b1b1b;">Restore aspect ratio</span>
<div class="cb" style="left:1468.4px;top:893.3px;background:#fdfdfe;border-color:#bcc4dd;"></div>
<span class="t" style="left:1489.90px;top:891.77px;font-size:15.5px;letter-spacing:-0.228px;color:#1b1b1b;">Show named view widget</span>
<div class="cb" style="left:1468.4px;top:918.3px;background:#fdfdfe;border-color:#bcc4dd;"></div>
<span class="t" style="left:1489.90px;top:916.77px;font-size:15.5px;letter-spacing:-0.186px;color:#1b1b1b;">Auto-select named view widgets</span>
<svg width="453" height="240" viewBox="1466 220 453 240" style="left:1466px;top:220px;font-family:'Liberation Serif',serif">
<defs><linearGradient id="rGrey" x1="0" y1="0" x2="1" y2="1"><stop offset="0" stop-color="#f4f4f4"/><stop offset="1" stop-color="#3a3a3a"/></linearGradient>
<linearGradient id="rCam" x1="0" y1="0" x2="0" y2="1"><stop offset="0" stop-color="#6a6a6a"/><stop offset="1" stop-color="#1a1a1a"/></linearGradient>
<linearGradient id="rMon" x1="0" y1="0" x2="0" y2="1"><stop offset="0" stop-color="#a0a0a0"/><stop offset="1" stop-color="#f2f2f2"/></linearGradient>
<linearGradient id="rUp" x1="0" y1="0" x2="0" y2="1"><stop offset="0" stop-color="#5a78f0"/><stop offset="1" stop-color="#b4c4ff"/></linearGradient></defs>
<path d="M1471.5 236.5Q1471.5 235 1473 234.8L1476.4 234L1477.6 232.2H1483.6L1485 234L1487.6 234.6Q1489 235 1489 236.5V244Q1489 245.6 1487.4 245.6H1473Q1471.5 245.6 1471.5 244z" fill="url(#rCam)"/><circle cx="1480.4" cy="240" r="3.6" fill="#bcd" stroke="#eee" stroke-width=".8"/><circle cx="1480.4" cy="240" r="1.8" fill="#345"/><circle cx="1484.6" cy="243.6" r="4.6" fill="#ebecf0"/><path d="M1481 243.6H1488.4M1484.7 240V247.3" stroke="#000" stroke-width="1.7"/>
<path d="M1504.4 233.3A7.2 7.2 0 1 1 1501.05 237.6" fill="none" stroke="#3454d4" stroke-width="2.7"/><path d="M1504.4 233.3A7.2 7.2 0 0 1 1515.2 239.5" fill="none" stroke="#0a1460" stroke-width="2.7"/><path d="M1508 246.7A7.2 7.2 0 0 1 1501.05 237.6" fill="none" stroke="#5a80f0" stroke-width="2.7"/><path d="M1499 231.2L1507.6 230.2L1503.4 238z" fill="#050a40"/>
<path d="M1528 231.6L1542 246.2M1542 231.6L1528 246.2" stroke="#d41010" stroke-width="3"/>
<path d="M1556 230.6H1561.6L1564.4 233.4V242.4H1556z" fill="#fff" stroke="#222" stroke-width="1.4" stroke-linejoin="round"/><path d="M1561.6 235.4H1567L1570 238.4V247H1561.6z" fill="url(#gPaper)" stroke="#222" stroke-width="1.4" stroke-linejoin="round"/>
<rect x="1581.8" y="232" width="12.8" height="13.6" rx="1.5" fill="#d6d6d8" stroke="#b8b8bc" stroke-width="1"/><rect x="1585" y="230" width="6.4" height="3.4" rx="1" fill="#dcdce0" stroke="#b0b0b4" stroke-width=".8"/><rect x="1585.6" y="234.6" width="7" height="1.8" fill="#c0c0c4"/><rect x="1589.6" y="239" width="10" height="9.4" fill="#e2e2e6" stroke="#b4b4b8" stroke-width="1"/><path d="M1591.4 242H1596M1591.4 244H1597.4M1591.4 246H1595" stroke="#bbb" stroke-width=".8"/>
<path d="M1610 247V237Q1610 235.6 1611.4 235.6H1614.6L1616.4 237.4H1622Q1623.2 237.4 1623.2 238.6V240" fill="#f3cf4a" stroke="#222" stroke-width="1.2" stroke-linejoin="round"/><path d="M1609.8 247.4L1613.6 240H1626.8L1623 247.4z" fill="url(#gFolder)" stroke="#222" stroke-width="1.2" stroke-linejoin="round"/>
<path d="M1636 235.8H1644M1641.6 230V241" stroke="#111" stroke-width="1.1"/><path d="M1641.6 230V241" stroke="#ebecf0" stroke-width="1.1" stroke-dasharray="1 4.6" stroke-dashoffset="-4.6"/><path d="M1645 233V244.4L1647.8 242L1650 247L1652.4 246L1650.4 241.4H1654z" fill="#fff" stroke="#000" stroke-width="1.1" stroke-linejoin="round"/>
<path d="M1663.6 243.4L1669 237L1675 234.8H1679.6V241.4L1675.6 242.6L1672 241.4L1667 244.6z" fill="#fff" stroke="#222" stroke-width="1"/><path d="M1665.4 243.2L1669.6 238.6M1667 243.8L1671 239.4M1668.6 244L1672.6 240" stroke="#444" stroke-width=".8"/><rect x="1679.6" y="234.6" width="2.4" height="7.4" fill="#000"/>
<rect x="1691.6" y="230.6" width="11.8" height="11.8" rx="2.6" fill="#e4e4e4" stroke="#000" stroke-width="1.3"/><rect x="1695.8" y="235" width="12" height="12" rx="2.6" fill="url(#rGrey)" stroke="#000" stroke-width="1.3"/>
<path d="M1720 238.2Q1728 230.6 1736 238.2Q1728 245.6 1720 238.2z" fill="#fff" stroke="#000" stroke-width="1.2"/><circle cx="1728" cy="238.2" r="3" fill="#c86a10"/><circle cx="1728" cy="238.2" r="1.1" fill="#222"/>
<path d="M1747.4 242L1754.8 233.4L1762.2 242z" fill="url(#rUp)" stroke="#1c2c82" stroke-width="1" stroke-linejoin="round"/>
<path d="M1775 235L1782.8 244L1790.6 235z" fill="#d4d4d8" stroke="#b4b4b8" stroke-width="1" stroke-linejoin="round"/>
<rect x="1801.4" y="230.4" width="17.4" height="17.2" fill="#000"/><rect x="1802.6" y="233.6" width="15" height="10.8" rx="2" fill="#8da4ff"/><rect x="1802.4" y="231.2" width="1.8" height="1.6" fill="#fff"/><rect x="1802.4" y="245.2" width="1.8" height="1.6" fill="#fff"/><rect x="1805.9" y="231.2" width="1.8" height="1.6" fill="#fff"/><rect x="1805.9" y="245.2" width="1.8" height="1.6" fill="#fff"/><rect x="1809.4" y="231.2" width="1.8" height="1.6" fill="#fff"/><rect x="1809.4" y="245.2" width="1.8" height="1.6" fill="#fff"/><rect x="1812.9" y="231.2" width="1.8" height="1.6" fill="#fff"/><rect x="1812.9" y="245.2" width="1.8" height="1.6" fill="#fff"/><rect x="1816.4" y="231.2" width="1.8" height="1.6" fill="#fff"/><rect x="1816.4" y="245.2" width="1.8" height="1.6" fill="#fff"/>
<circle cx="1838.2" cy="238.9" r="9" fill="url(#gHelp)"/><text x="1838.2" y="245.6" font-weight="700" font-size="18.5" text-anchor="middle" fill="#fff">?</text>
<g transform="translate(1903.8,240.2) scale(.75) translate(-18.7,-18.5)"><path d="M7.7 7.3L29.7 12.2L17.5 18.8z" fill="#ff9068"/><path d="M7.7 7.3L17.5 18.8V22.5L7.85 11.3z" fill="#f02418"/><path d="M7.85 11.3L17.5 22.5V26.2L8 15.3z" fill="#f4f4f4"/><path d="M8 15.3L17.5 26.2V29.8L8.1 19.2z" fill="#4a64e0"/><path d="M17.5 18.8L29.7 12.2V16L17.5 22.5z" fill="#d41208"/><path d="M17.5 22.5L29.7 16V19.8L17.5 26.2z" fill="#c8c8c8"/><path d="M17.5 26.2L29.7 19.8V23.5L17.5 29.8z" fill="#182c8c"/><path d="M7.7 7.3L29.7 12.2V23.5L17.5 29.8L8.1 19.2z" fill="none" stroke="#000" stroke-width="1.6" stroke-linejoin="round"/><path d="M7.7 7.3L17.5 18.8L29.7 12.2" fill="none" stroke="#000" stroke-width="1"/></g>
<foreignObject x="1895.5" y="276.2" width="17" height="17"><div style="width:17px;height:17px;border-radius:50%;background:conic-gradient(#ff0000,#ffa000,#ffff00,#40ff00,#00ff80,#00ffff,#0060ff,#2000ff,#a000ff,#ff00ff,#ff0080,#ff0000);"></div></foreignObject><circle cx="1904" cy="284.7" r="8.2" fill="none" stroke="#000" stroke-width="1.2"/><circle cx="1904" cy="284.7" r="4.3" fill="#f2f2f4"/>
<rect x="1895.2" y="321.2" width="17.8" height="13.6" fill="url(#rMon)" stroke="#000" stroke-width="1.5"/><rect x="1902" y="335" width="4.4" height="2.2" fill="#000"/><rect x="1899.4" y="337" width="9.6" height="1.8" fill="#000"/>
<path d="M1895 372.4Q1895 371 1896.4 370.8L1900 370L1901.2 368.4H1907.4L1908.8 370.2L1911.4 370.6Q1912.8 371 1912.8 372.4V380.4Q1912.8 382 1911.2 382H1896.6Q1895 382 1895 380.4z" fill="url(#rCam)"/><circle cx="1905" cy="376" r="4.2" fill="#222" stroke="#999" stroke-width=".8"/><circle cx="1905" cy="376" r="2.2" fill="#3a5a70"/><circle cx="1904.2" cy="375.2" r=".8" fill="#cde"/>
<rect x="1895.4" y="411.6" width="17" height="15.6" fill="#d8d8d8" stroke="#222" stroke-width="1"/><path d="M1899.6 411.6V427.2M1903.8 411.6V427.2M1908.2 411.6V427.2M1895.4 415.4H1912.4M1895.4 419.4H1912.4M1895.4 423.4H1912.4" stroke="#555" stroke-width=".7"/><path d="M1903.8 411.6V419.4" stroke="#10a010" stroke-width="1.4"/><path d="M1903.8 419.4H1912.4" stroke="#d01010" stroke-width="1.4"/><rect x="1895.4" y="411.6" width="4" height="1.6" fill="#1a2a9a"/>
</svg>
<div class="r" style="left:2px;top:940px;width:1915px;height:77px;background:#dcdde1;border-radius:7px 7px 0 0;"></div>
<div class="r" style="left:2px;top:940px;width:23.6px;height:52px;background:#ebecf0;border-radius:7px 0 0 7px;"></div>
<div class="r" style="left:25px;top:964px;width:1892px;height:53px;background:#ebecf0;"></div>
<div class="r" style="left:2px;top:992px;width:28px;height:25px;background:#ebecf0;"></div>
<div class="r" style="left:94px;top:940px;width:128px;height:24px;background:#ebecf0;border-radius:8px 8px 0 0;"></div>
<svg width="10" height="10" style="left:222px;top:956px"><path d="M0 8V0q0 8 8 8z" fill="#ebecf0"/></svg>
<svg width="10" height="10" style="left:84px;top:956px"><path d="M10 8V0q0 8 -8 8z" fill="#ebecf0"/></svg>
<span class="t" style="left:39.25px;top:944.72px;font-size:15.5px;letter-spacing:-0.916px;color:#77787c;">Osnap</span>
<span class="t" style="left:107.00px;top:944.72px;font-size:15.5px;letter-spacing:-0.485px;color:#222;">Selection Filters</span>
<span class="t" style="left:4px;top:988.5px;font-size:15.5px;color:#77787c;transform-origin:0 0;transform:rotate(-90deg);letter-spacing:-0.75px;">Selec...</span>
<div class="cb" style="left:29.25px;top:971px;"></div><svg width="15" height="15" style="left:29.25px;top:971px"><path d="M2.8 7.2l3.2 3.6 6-7.8" fill="none" stroke="#5c5e62" stroke-width="2.2"/></svg>
<span class="t" style="left:51.25px;top:969.72px;font-size:15.5px;letter-spacing:-0.966px;color:#77787c;">Points</span>
<div class="cb" style="left:101.25px;top:971px;"></div><svg width="15" height="15" style="left:101.25px;top:971px"><path d="M2.8 7.2l3.2 3.6 6-7.8" fill="none" stroke="#5c5e62" stroke-width="2.2"/></svg>
<span class="t" style="left:123.00px;top:969.72px;font-size:15.5px;letter-spacing:-1.319px;color:#77787c;">Curves</span>
<div class="cb" style="left:177px;top:971px;"></div><svg width="15" height="15" style="left:177px;top:971px"><path d="M2.8 7.2l3.2 3.6 6-7.8" fill="none" stroke="#5c5e62" stroke-width="2.2"/></svg>
<span class="t" style="left:199.25px;top:969.72px;font-size:15.5px;letter-spacing:-1.023px;color:#77787c;">Surfaces</span>
<div class="cb" style="left:265px;top:971px;"></div><svg width="15" height="15" style="left:265px;top:971px"><path d="M2.8 7.2l3.2 3.6 6-7.8" fill="none" stroke="#5c5e62" stroke-width="2.2"/></svg>
<span class="t" style="left:287.00px;top:969.72px;font-size:15.5px;letter-spacing:-0.892px;color:#77787c;">PolySurfaces</span>
<div class="cb" style="left:380px;top:971px;"></div><svg width="15" height="15" style="left:380px;top:971px"><path d="M2.8 7.2l3.2 3.6 6-7.8" fill="none" stroke="#5c5e62" stroke-width="2.2"/></svg>
<span class="t" style="left:402.00px;top:969.72px;font-size:15.5px;letter-spacing:-1.255px;color:#77787c;">SubDs</span>
<div class="cb" style="left:455px;top:971px;"></div><svg width="15" height="15" style="left:455px;top:971px"><path d="M2.8 7.2l3.2 3.6 6-7.8" fill="none" stroke="#5c5e62" stroke-width="2.2"/></svg>
<span class="t" style="left:477.50px;top:969.72px;font-size:15.5px;letter-spacing:-1.204px;color:#77787c;">Meshes</span>
<div class="cb" style="left:537px;top:971px;"></div><svg width="15" height="15" style="left:537px;top:971px"><path d="M2.8 7.2l3.2 3.6 6-7.8" fill="none" stroke="#5c5e62" stroke-width="2.2"/></svg>
<span class="t" style="left:559.50px;top:969.72px;font-size:15.5px;letter-spacing:-0.261px;color:#77787c;">Annotations</span>
<div class="cb" style="left:650px;top:971px;"></div><svg width="15" height="15" style="left:650px;top:971px"><path d="M2.8 7.2l3.2 3.6 6-7.8" fill="none" stroke="#5c5e62" stroke-width="2.2"/></svg>
<span class="t" style="left:672.50px;top:969.72px;font-size:15.5px;letter-spacing:-0.622px;color:#77787c;">Lights</span>
<div class="cb" style="left:722px;top:971px;"></div><svg width="15" height="15" style="left:722px;top:971px"><path d="M2.8 7.2l3.2 3.6 6-7.8" fill="none" stroke="#5c5e62" stroke-width="2.2"/></svg>
<span class="t" style="left:744.50px;top:969.72px;font-size:15.5px;letter-spacing:-0.930px;color:#77787c;">Blocks</span>
<div class="cb" style="left:796.75px;top:971px;"></div><svg width="15" height="15" style="left:796.75px;top:971px"><path d="M2.8 7.2l3.2 3.6 6-7.8" fill="none" stroke="#5c5e62" stroke-width="2.2"/></svg>
<span class="t" style="left:819.25px;top:969.72px;font-size:15.5px;letter-spacing:-0.469px;color:#77787c;">Control Points</span>
<div class="cb" style="left:922px;top:971px;"></div><svg width="15" height="15" style="left:922px;top:971px"><path d="M2.8 7.2l3.2 3.6 6-7.8" fill="none" stroke="#5c5e62" stroke-width="2.2"/></svg>
<span class="t" style="left:944.50px;top:969.72px;font-size:15.5px;letter-spacing:-0.603px;color:#77787c;">Point Clouds</span>
<div class="cb" style="left:1037px;top:971px;"></div><svg width="15" height="15" style="left:1037px;top:971px"><path d="M2.8 7.2l3.2 3.6 6-7.8" fill="none" stroke="#5c5e62" stroke-width="2.2"/></svg>
<span class="t" style="left:1059.50px;top:969.72px;font-size:15.5px;letter-spacing:-0.768px;color:#77787c;">Hatches</span>
<div class="cb" style="left:1123px;top:971px;"></div><svg width="15" height="15" style="left:1123px;top:971px"><path d="M2.8 7.2l3.2 3.6 6-7.8" fill="none" stroke="#5c5e62" stroke-width="2.2"/></svg>
<span class="t" style="left:1145.00px;top:969.72px;font-size:15.5px;letter-spacing:-0.802px;color:#77787c;">Others</span>
<div class="cb" style="left:1211.25px;top:971px;background:#fff;border-color:#c9ccd6;"></div>
<span class="t" style="left:1233.25px;top:969.72px;font-size:15.5px;letter-spacing:-0.335px;color:#1b1b1b;">Sub-objects</span>
<div class="cb" style="left:1325.5px;top:971px;background:#fff;border-color:#c9ccd6;"></div><svg width="15" height="15" style="left:1325.5px;top:971px"><path d="M2.8 7.2l3.2 3.6 6-7.8" fill="none" stroke="#111" stroke-width="2.2"/></svg>
<span class="t" style="left:1347.50px;top:969.72px;font-size:15.5px;letter-spacing:-0.490px;color:#1b1b1b;">Disable</span>
<div class="r" style="left:897px;top:993px;width:60px;height:24px;background:#cfd6ee;border-radius:4px 4px 0 0;"></div>
<div class="r" style="left:1027px;top:993px;width:63.5px;height:24px;background:#cfd6ee;border-radius:4px 4px 0 0;"></div>
<div class="r" style="left:1196.25px;top:993px;width:138.25px;height:24px;background:#cfd6ee;border-radius:4px 4px 0 0;"></div>
<svg width="20" height="20" style="left:8px;top:996px"><rect x="2" y="2.5" width="15" height="14" fill="#f4f4f4" stroke="#444644" stroke-width="2"/><rect x="2" y="2.5" width="5" height="14" fill="#444644"/></svg>
<span class="t" style="left:52.50px;top:996.72px;font-size:15.5px;letter-spacing:-1.267px;color:#3a3b40;">CPlane</span>
<span class="t" style="left:148.75px;top:996.72px;font-size:15.5px;letter-spacing:-0.607px;color:#3a3b40;">x -1.719</span>
<span class="t" style="left:254.25px;top:996.72px;font-size:15.5px;letter-spacing:-0.744px;color:#3a3b40;">y 25.804</span>
<span class="t" style="left:378.75px;top:996.72px;font-size:15.5px;letter-spacing:-1.213px;color:#3a3b40;">z 0</span>
<span class="t" style="left:467.00px;top:996.72px;font-size:15.5px;letter-spacing:-0.180px;color:#3a3b40;">Millimeters</span>
<span class="t" style="left:598.25px;top:996.72px;font-size:15.5px;letter-spacing:-0.226px;color:#3a3b40;">imagem-Alvw</span>
<span class="t" style="left:818.75px;top:996.72px;font-size:15.5px;letter-spacing:-0.754px;color:#3a3b40;">Grid Snap</span>
<span class="t" style="left:972.50px;top:996.72px;font-size:15.5px;letter-spacing:-0.960px;color:#3a3b40;">Planar</span>
<span class="t" style="left:1108.00px;top:996.72px;font-size:15.5px;letter-spacing:-0.834px;color:#3a3b40;">SmartTrack</span>
<span class="t" style="left:1371.25px;top:996.72px;font-size:15.5px;letter-spacing:-0.471px;color:#3a3b40;">Auto CPlane (Object)</span>
<span class="t" style="left:1540.00px;top:996.72px;font-size:15.5px;letter-spacing:-0.423px;color:#3a3b40;">Record History</span>
<span class="t" style="left:1665.75px;top:996.72px;font-size:15.5px;letter-spacing:-0.538px;color:#3a3b40;">Filter</span>
<span class="t" style="left:1726.25px;top:996.72px;font-size:15.5px;letter-spacing:-0.422px;color:#3a3b40;">Available physical</span>
<span class="t" style="left:907.00px;top:996.72px;font-size:15.5px;letter-spacing:-0.234px;color:#1b1b1b;font-weight:700;">Ortho</span>
<span class="t" style="left:1037.50px;top:996.72px;font-size:15.5px;letter-spacing:-1.120px;color:#1b1b1b;font-weight:700;">Osnap</span>
<span class="t" style="left:1206.25px;top:996.72px;font-size:15.5px;letter-spacing:-0.374px;color:#1b1b1b;font-weight:700;">Gumball (Object)</span>
<div class="r" style="left:570px;top:995.5px;width:20px;height:19.5px;background:#000;"></div>
<svg width="14" height="18" style="left:1346px;top:996px"><rect x="1.5" y="7.5" width="10" height="8" rx="1" fill="#f2f2f2" stroke="#aaa"/><path d="M3.5 7.5V5a3 3 0 0 1 6 0V7.5" fill="none" stroke="#aaa" stroke-width="1.3"/></svg>
<svg width="20" height="20" style="left:1892px;top:996px"><rect x="2.5" y="2" width="15" height="14" fill="#f4f4f4" stroke="#444644" stroke-width="2"/><rect x="12" y="2" width="5.5" height="14" fill="#444644"/></svg>
<svg width="16" height="16" style="left:1897px;top:944px"><g transform="translate(8,8)"><rect x="-1.6" y="-7.2" width="3.2" height="3.4" fill="#d0d1d6" transform="rotate(0)"/><rect x="-1.6" y="-7.2" width="3.2" height="3.4" fill="#d0d1d6" transform="rotate(45)"/><rect x="-1.6" y="-7.2" width="3.2" height="3.4" fill="#d0d1d6" transform="rotate(90)"/><rect x="-1.6" y="-7.2" width="3.2" height="3.4" fill="#d0d1d6" transform="rotate(135)"/><rect x="-1.6" y="-7.2" width="3.2" height="3.4" fill="#d0d1d6" transform="rotate(180)"/><rect x="-1.6" y="-7.2" width="3.2" height="3.4" fill="#d0d1d6" transform="rotate(225)"/><rect x="-1.6" y="-7.2" width="3.2" height="3.4" fill="#d0d1d6" transform="rotate(270)"/><rect x="-1.6" y="-7.2" width="3.2" height="3.4" fill="#d0d1d6" transform="rotate(315)"/><circle r="4.4" fill="none" stroke="#d0d1d6" stroke-width="2.4"/></g></svg>
</body></html>
